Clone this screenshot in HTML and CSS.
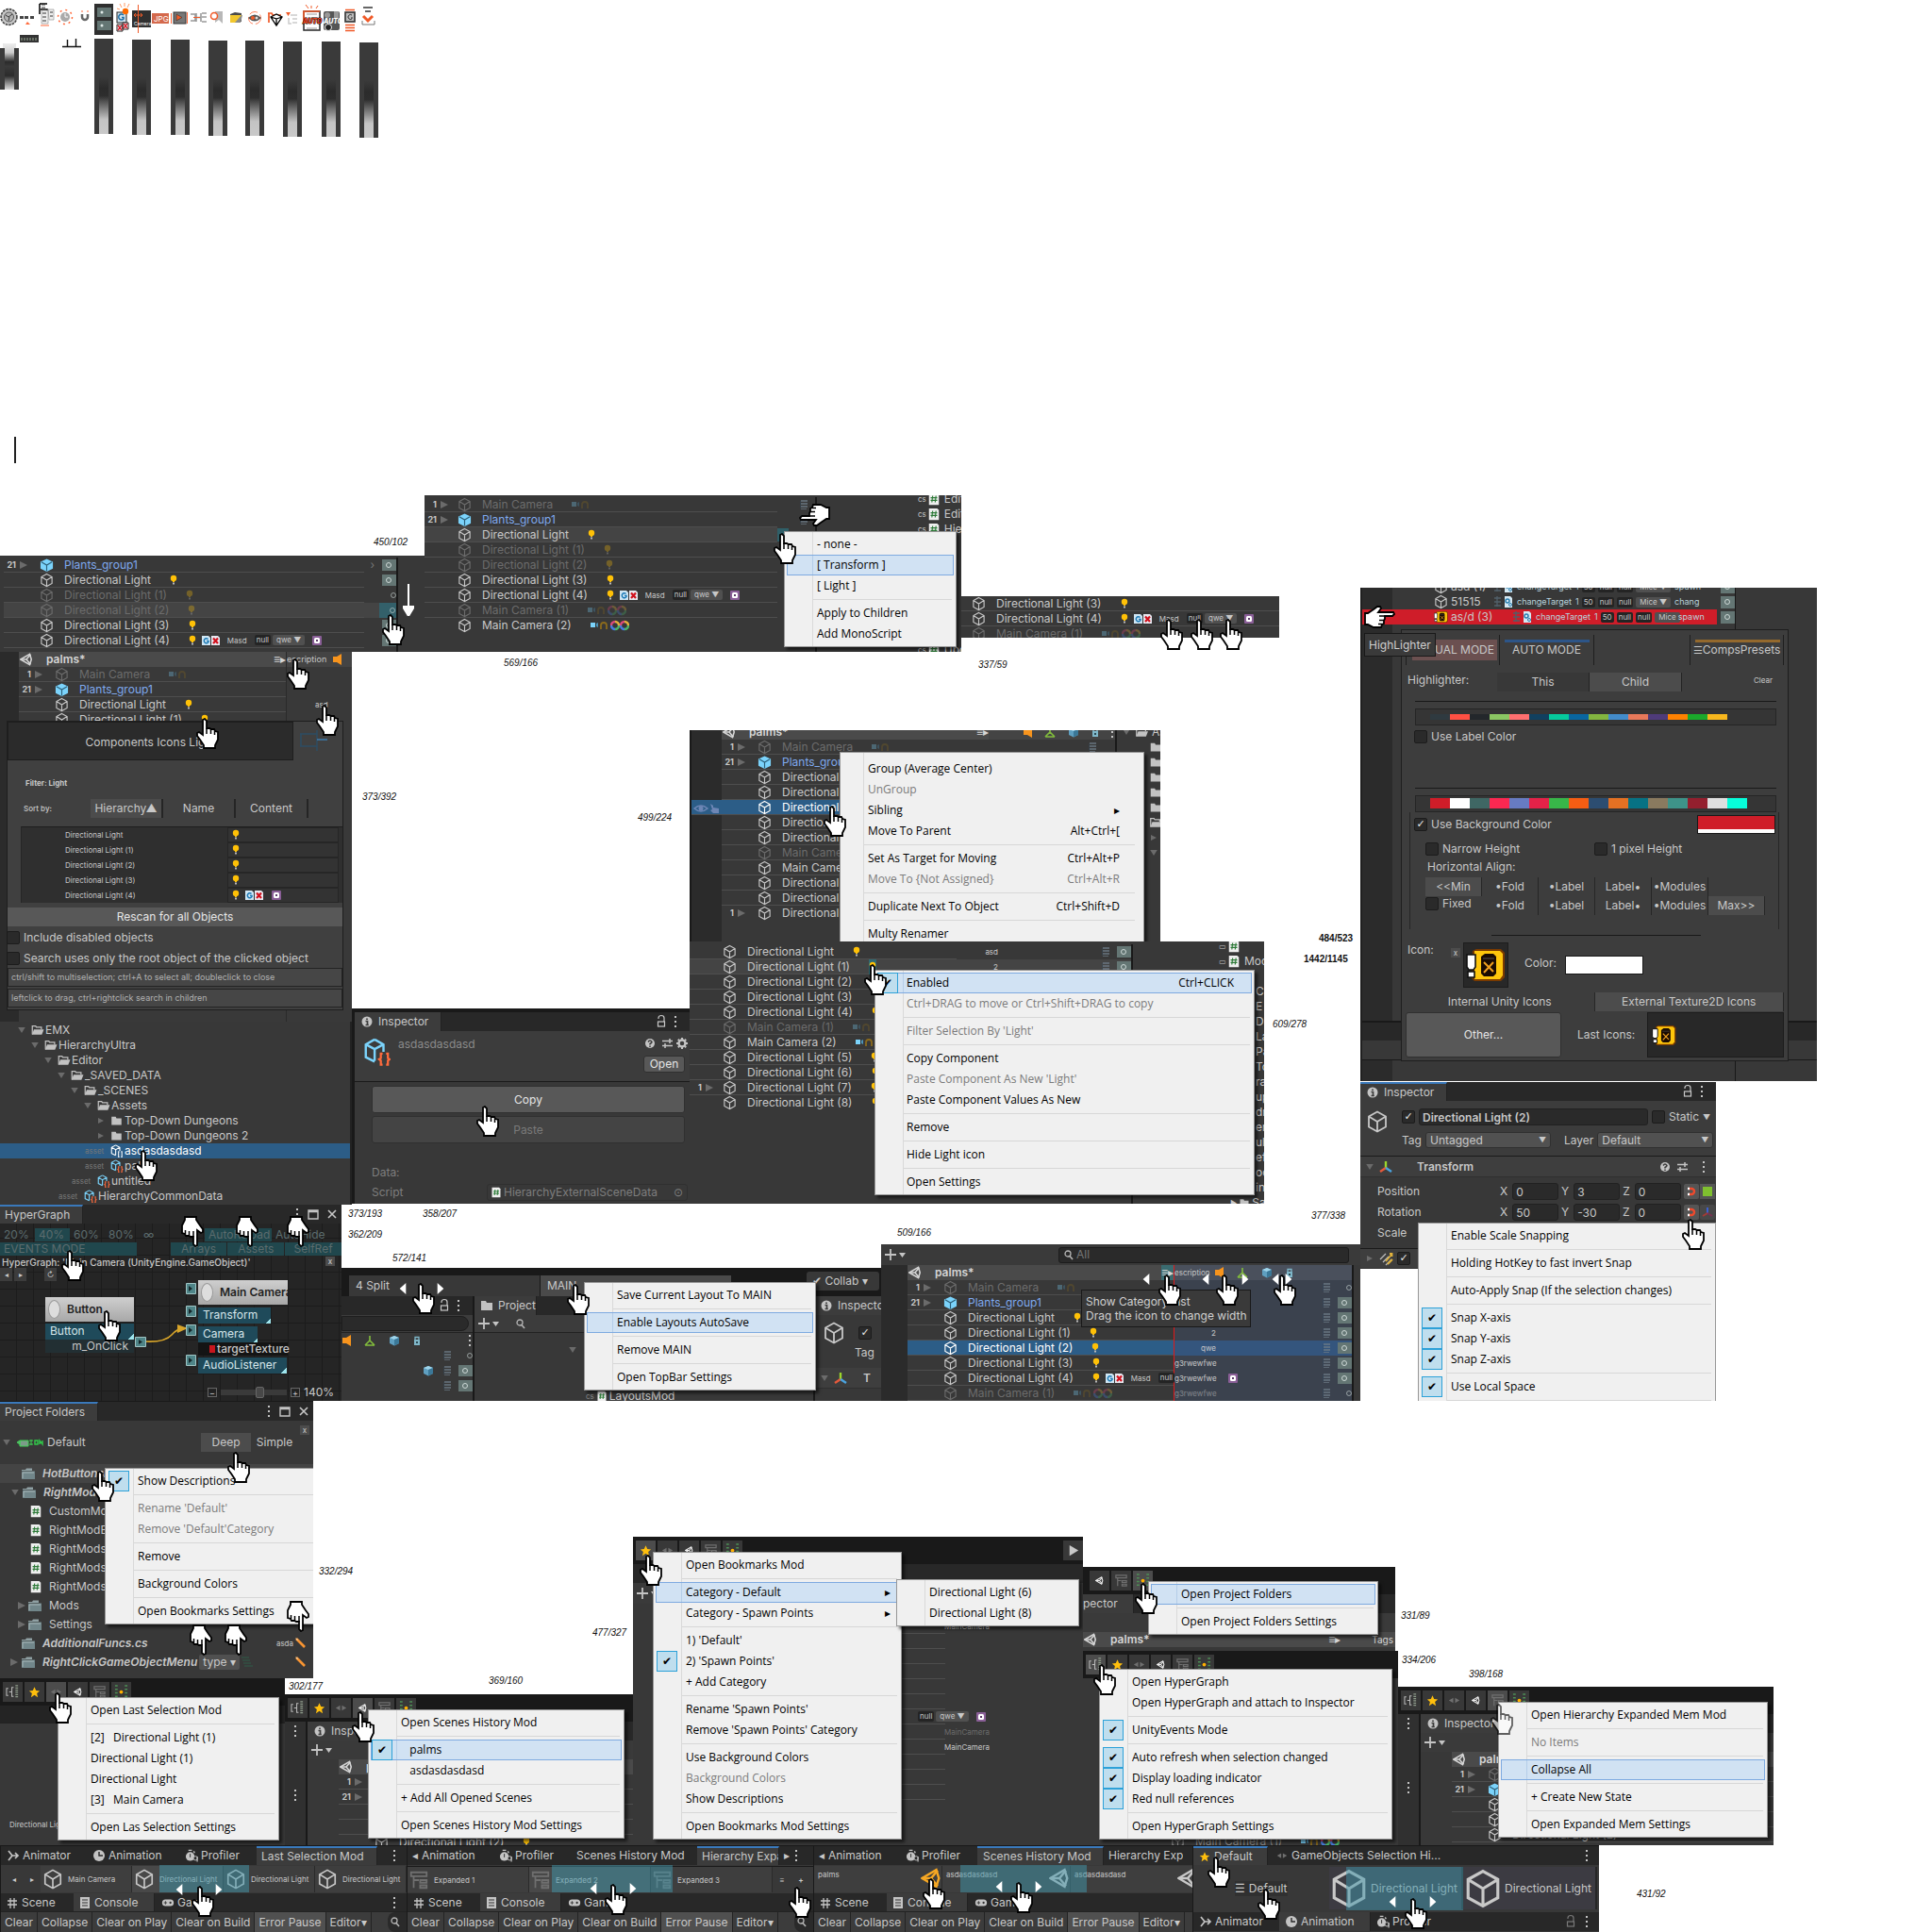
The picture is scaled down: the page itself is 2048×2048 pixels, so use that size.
FILE: index.html
```html
<!DOCTYPE html>
<html lang="en">
<head>
<meta charset="utf-8">
<title>Hierarchy help sheet</title>
<link rel="stylesheet" href="styles.css">
</head>
<body>
<svg class="defs" aria-hidden="true">
<symbol id="cube" viewBox="0 0 16 16"><path d="M8 1L14 4.3V11.7L8 15L2 11.7V4.3ZM2 4.3L8 8L14 4.3M8 8V15" fill="none" stroke="currentColor" stroke-width="1.2"/></symbol>
<symbol id="cubef" viewBox="0 0 16 16"><path d="M8 1L15 4.3V11.9L8 15.5L1 11.9V4.3Z" fill="#7bd3fb"/><path d="M2 4.6L8 8L14 4.6M8 8V15" fill="none" stroke="#2c5f78" stroke-width="1.2"/></symbol>
<symbol id="cubes" viewBox="0 0 16 16"><path d="M8 3L13 5V11L8 13.500L3 11V5Z" fill="#5f9fc0"/><path d="M3 5L8 7L13 5L8 3Z" fill="#9fd4ea"/><path d="M8 7V13.500L13 11V5Z" fill="#3b7898"/></symbol>
<symbol id="braces" viewBox="0 0 16 16"><path d="M7 1L12 3.8V8M7 13.5L2 11V3.8L7 1M2 3.8L7 6.5L12 3.8M7 6.5V13" fill="none" stroke="#7bd3fb" stroke-width="1.3"/><path d="M11.5 9H10.5V11.5L9.5 12.2L10.5 13V15.3H11.5M13.5 9H14.5V11.5L15.5 12.2L14.5 13V15.3H13.5" fill="none" stroke="#ff6b3d" stroke-width="1.2"/></symbol>
<symbol id="bracesw" viewBox="0 0 16 16"><path d="M7 1L12 3.8V8M7 13.5L2 11V3.8L7 1M2 3.8L7 6.5L12 3.8M7 6.5V13M11.5 9H10.5V15.3H11.5M13.5 9H14.5V15.3H13.5" fill="none" stroke="#fff" stroke-width="1.2"/></symbol>
<symbol id="bulb" viewBox="0 0 8 16"><circle cx="4" cy="6" r="3.2" fill="#ffc107"/><rect x="3" y="8" width="2" height="2" fill="#ffc107"/><rect x="3" y="10.5" width="2" height="2" fill="#b9b9b9"/></symbol>
<symbol id="tri" viewBox="0 0 8 16"><path d="M0 4L8 8L0 12Z" fill="#6b6b6b"/></symbol>
<symbol id="trid" viewBox="0 0 10 16"><path d="M0 4H10L5 12Z" fill="#6b6b6b"/></symbol>
<symbol id="gx" viewBox="0 0 20 16"><path d="M0 3H7L9 5V13H0Z" fill="#cfe6f4"/><path d="M6.500 6.500A2.500 2.500 0 1 0 7 9.500V8.500H5" fill="none" stroke="#1f7bb6" stroke-width="1.5"/><path d="M10 3H17L19 5V13H10Z" fill="#e8e8f0"/><path d="M12 5.500L17 11M17 5.500L12 11" stroke="#d1101c" stroke-width="2.200"/></symbol>
<symbol id="gear2" viewBox="0 0 20 16"><path d="M0 4H7M0 8H7M0 12H7M3 2V13" stroke="#51606a" stroke-width="1.300"/><path d="M11 2H17L19 4V14H11Z" fill="#d5e8f2"/><circle cx="14" cy="7" r="2" fill="none" stroke="#2a7fb0" stroke-width="1.500"/><circle cx="17" cy="11" r="1.500" fill="none" stroke="#2a7fb0"/></symbol>
<symbol id="pur" viewBox="0 0 10 16"><rect y="3" width="10" height="10" rx="1" fill="#8a5f97"/><rect x="2" y="5" width="6" height="6" rx="1.5" fill="#fff"/><rect x="4" y="7" width="2" height="2" fill="#5c3b68"/></symbol>
<symbol id="cam" viewBox="0 0 18 16"><rect x="0" y="5" width="5" height="5" fill="#7bd3fb"/><path d="M6 6L8 5V10L6 9Z" fill="#4a93b8"/><path d="M11 12V8A3 3 0 0 1 17 8V12" fill="none" stroke="#8a6a1c" stroke-width="1.8"/></symbol>
<symbol id="rings" viewBox="0 0 20 16"><g fill="none" stroke-width="2.4"><path d="M5 4A4 4 0 0 1 9 8M15 4A4 4 0 0 1 19 8" stroke="#e7b13a"/><path d="M9 8A4 4 0 0 1 5 12M19 8A4 4 0 0 1 15 12" stroke="#4bb56a"/><path d="M5 12A4 4 0 0 1 1 8M15 12A4 4 0 0 1 11 8" stroke="#4a7de0"/><path d="M1 8A4 4 0 0 1 5 4M11 8A4 4 0 0 1 15 4" stroke="#dd4a7a"/></g></symbol>
<symbol id="unity" viewBox="0 0 16 16"><path d="M1 8L12 1.500L14 8L12 14.500Z" fill="none" stroke="currentColor" stroke-width="1.8"/><path d="M1 8H8L13 2M8 8L13 14" fill="none" stroke="currentColor" stroke-width="1.8"/></symbol>
<symbol id="stack" viewBox="0 0 8 16"><g fill="#6c7a86"><rect x="1" y="3" width="7" height="2"/><rect x="1" y="6" width="7" height="2"/><rect x="1" y="9" width="7" height="2"/><rect x="1" y="12" width="6" height="1"/></g><path d="M0 4V12" stroke="#2f4a63"/></symbol>
<symbol id="fold" viewBox="0 0 16 16"><path d="M2 3H7L8 5H14V13H2Z" fill="#c2c2c2"/></symbol>
<symbol id="foldo" viewBox="0 0 16 16"><path d="M2 13V3H6L7 4.500H13V7" fill="none" stroke="#c2c2c2" stroke-width="1.4"/><path d="M4 7H16L13.500 13.500H1.500Z" fill="#c2c2c2"/></symbol>
<symbol id="foldg" viewBox="0 0 16 16"><path d="M1 4H5L6 2.500H12V5H1Z" fill="#8fa0a3"/><path d="M1 5.500H15V14H1Z" fill="#71868a"/><path d="M2 13V7H14" fill="none" stroke="#a7b6b8"/></symbol>
<symbol id="hash" viewBox="0 0 12 16"><path d="M0 1H10L12 3V15H0Z" fill="#efefef"/><path d="M4.500 4L3.500 12M8.500 4L7.500 12M2 6.500H10M2 9.500H10" stroke="#2d7a38" stroke-width="1.3"/></symbol>
<symbol id="info" viewBox="0 0 16 16"><circle cx="8" cy="8" r="5.500" fill="#c4c4c4"/><path d="M8 4.500V6M6.500 7.500H8.500V11M6.500 11.500H9.800" stroke="#3c3c3c" stroke-width="1.7" fill="none"/></symbol>
<symbol id="lock" viewBox="0 0 12 16"><path d="M3 5V4A3 2.500 0 0 1 9 4V8" fill="none" stroke="currentColor" stroke-width="1.2"/><rect x="2.500" y="8" width="7" height="5" fill="none" stroke="currentColor" stroke-width="1.2"/></symbol>
<symbol id="dots" viewBox="0 0 6 16"><path d="M2 2H4V4H2ZM2 7H4V9H2ZM2 12H4V14H2Z" fill="#c4c4c4"/></symbol>
<symbol id="max" viewBox="0 0 12 16"><path d="M1 4H11V13H1ZM1 5.500H11" fill="none" stroke="#c4c4c4" stroke-width="1.400"/></symbol>
<symbol id="x" viewBox="0 0 12 16"><path d="M2 4L10 12M10 4L2 12" stroke="currentColor" stroke-width="1.6"/></symbol>
<symbol id="help" viewBox="0 0 34 16"><circle cx="8" cy="8" r="5" fill="#c4c4c4"/><path d="M6 6.500Q8 3.500 10 6.500Q10 7.500 8 8.500V9.500M8 10.500V12" stroke="#3c3c3c" stroke-width="1.5" fill="none"/><path d="M21 5.500H32M21 10.500H32M29 3V8M24 8V13" stroke="#c4c4c4" stroke-width="1.500"/></symbol>
<symbol id="cog" viewBox="0 0 16 16"><circle cx="8" cy="8" r="3.500" fill="none" stroke="#c4c4c4" stroke-width="2.400"/><path d="M8 2V4M8 12V14M2 8H4M12 8H14M3.800 3.800L5.200 5.200M10.800 10.800L12.200 12.200M3.800 12.200L5.200 10.800M10.800 5.200L12.200 3.800" stroke="#c4c4c4" stroke-width="2"/></symbol>
<symbol id="find" viewBox="0 0 12 16"><circle cx="5" cy="7" r="3" fill="none" stroke="#b5b5b5" stroke-width="1.3"/><path d="M7 9.500L10 13" stroke="#b5b5b5" stroke-width="1.600"/></symbol>
<symbol id="plus" viewBox="0 0 24 16"><path d="M7 2V14M1 8H13" stroke="#c4c4c4" stroke-width="1.800"/><path d="M16 6H23L19.500 11Z" fill="#c4c4c4"/></symbol>
<symbol id="speaker" viewBox="0 0 12 16"><path d="M1 5H5L10 2V14L5 11H1Z" fill="#f7941d"/></symbol>
<symbol id="axis" viewBox="0 0 16 16"><path d="M8 9V2" stroke="#9bd62c" stroke-width="2.400"/><path d="M8 9L2 13" stroke="#e5593b" stroke-width="2.400"/><path d="M8 9L14 13" stroke="#4aa3df" stroke-width="2.400"/></symbol>
<symbol id="axisd" viewBox="0 0 16 16"><rect width="16" height="16" rx="2" fill="#484848"/><path d="M8 9V3" stroke="#3b5fd0" stroke-width="2"/><path d="M8 9L3 12" stroke="#a53a35" stroke-width="2"/><path d="M8 9L13 12" stroke="#7a3050" stroke-width="2"/></symbol>
<symbol id="tent" viewBox="0 0 14 16"><path d="M7 3V8L2 13M7 8L12 13M2 13H12" fill="none" stroke="#82bd3c" stroke-width="1.600"/></symbol>
<symbol id="locks" viewBox="0 0 10 16"><path d="M3 7V4.500H7V7" fill="none" stroke="#7fb7c9" stroke-width="1.300"/><rect x="2" y="7" width="6" height="6" fill="#7fb7c9"/><rect x="4" y="9" width="2" height="2" fill="#2c4a55"/></symbol>
<symbol id="play" viewBox="0 0 16 16"><path d="M4 2V14L14 8Z" fill="#c9c9c9"/></symbol>
<symbol id="mem" viewBox="0 0 16 16"><path d="M3 4H1V12H3M4 8H7M9 3H7V13H9" fill="none" stroke="#bbb" stroke-width="1.100"/><path d="M11 1H14M11 3.500H14M11 6H14M11 8.500H14M11 11H14M11 13.500H14" stroke="#8f9c8b" stroke-width="1.300"/></symbol>
<symbol id="star" viewBox="0 0 16 16"><path d="M8 2.500L9.800 6.500L14 6.800L10.800 9.500L11.800 14L8 11.500L4.200 14L5.200 9.500L2 6.800L6.200 6.500Z" fill="#ffbf0d"/></symbol>
<symbol id="lr" viewBox="0 0 16 16"><path d="M7 5V11L2 8ZM9 5V11L14 8Z" fill="#6f6f6f"/></symbol>
<symbol id="list" viewBox="0 0 16 16"><path d="M2 2H14V5H2ZM4 5V14M4 8H8M9 8H14V10H9ZM9 12H14V14H9Z" fill="none" stroke="#6f6f6f" stroke-width="1.300"/></symbol>
<symbol id="grid4" viewBox="0 0 16 16"><path d="M1 1H4M12 1H15M1 5H4M12 5H15M1 9H4M12 9H15M1 13H4M12 13H15" stroke="#4d8f55" stroke-width="1.500"/><circle cx="8" cy="8" r="2" fill="#ffb000"/></symbol>
<symbol id="anim" viewBox="0 0 14 16"><path d="M2 3L6 8H12M2 13L6 8M9 5L12 8L9 11" fill="none" stroke="#c4c4c4" stroke-width="1.700"/></symbol>
<symbol id="clock" viewBox="0 0 14 16"><circle cx="7" cy="8" r="6" fill="#c4c4c4"/><path d="M7 4V8H11" fill="none" stroke="#282828" stroke-width="1.400"/></symbol>
<symbol id="prof" viewBox="0 0 15 16"><circle cx="6" cy="9" r="5" fill="#c4c4c4"/><path d="M6 6V9.500M4 2H8M10 3L11 5" stroke="#c4c4c4" stroke-width="1.500"/><path d="M6 6V10" stroke="#282828"/><circle cx="12" cy="11" r="2.300" fill="#282828" stroke="#c4c4c4"/><path d="M14 9V15" stroke="#c4c4c4" stroke-width="1.300"/></symbol>
<symbol id="sharp" viewBox="0 0 12 16"><path d="M4 3V14M8 3V14M1 6H11M1 10H11" stroke="#c4c4c4" stroke-width="1.300"/></symbol>
<symbol id="cons" viewBox="0 0 12 16"><path d="M1 2H11V14H1Z" fill="#c4c4c4"/><path d="M3 5H9M3 8H9M3 11H9" stroke="#333"/></symbol>
<symbol id="pad" viewBox="0 0 16 16"><rect x="1" y="4" width="14" height="8" rx="4" fill="#c4c4c4"/><path d="M5 6V10M3 8H7" stroke="#333"/><circle cx="11" cy="8" r="1.300" fill="#333"/></symbol>
<symbol id="pencil" viewBox="0 0 12 12"><path d="M1 1L10 10" stroke="#f79432" stroke-width="2.600"/><path d="M0 0L3 2L2 3Z" fill="#f2dbc0"/></symbol>
<symbol id="jar" viewBox="0 0 42 36"><path d="M7 3L11 1H37L41 5V31L37 35H9L5 31Z" fill="#7a3a00"/><path d="M9 3H36L39 6V29L36 33H9Z" fill="#ffc60b"/><path d="M16 9L20 6H29L32 9V27L29 30H19L16 27Z" fill="#1a0b02"/><path d="M18 11H30" stroke="#555"/><path d="M19 15L29 25M29 15L19 26" stroke="#f0a020" stroke-width="2"/><path d="M1 7H10V20L8 23H3L1 20ZM2 25H9V31H2Z" fill="#fff" stroke="#111" stroke-width="1.600"/></symbol>
<symbol id="magnet" viewBox="0 0 16 16"><rect width="16" height="16" rx="2" fill="#555"/><path d="M6 5H8A3 3 0 0 1 8 11H6" fill="none" stroke="#ee4a2d" stroke-width="2.400"/><path d="M4 5H6M4 11H6" stroke="#fff" stroke-width="2.400"/></symbol>
<symbol id="hand" viewBox="0 0 25 33"><path d="M8 2L10 1L12 3V11H15L17 12H20L21 14L24 15V23L21 29V32H9V29L5 23L2 19V16L4 15L8 18Z" fill="#fff" stroke="#000" stroke-width="1.800"/><path d="M12 11V17M16.500 12V17M20.500 14V18" stroke="#000" stroke-width="1.500"/></symbol>
<symbol id="arrl" viewBox="0 0 10 18"><path d="M10 0V18L0 9Z" fill="#fff"/></symbol>
<symbol id="arrr" viewBox="0 0 10 18"><path d="M0 0V18L10 9Z" fill="#fff"/></symbol>
</svg>

<main class="desk">
<!-- toolbar glyph strip -->
<svg class="glyphs" viewBox="0 0 410 150" role="img" aria-label="Module icons">
<defs><linearGradient id="gr" x1="0" y1="0" x2="0" y2="1"><stop offset=".4" stop-color="#3a3a3a"/><stop offset=".52" stop-color="#2b2b2b"/><stop offset=".6" stop-color="#2e2e2e"/><stop offset=".72" stop-color="#777"/><stop offset=".85" stop-color="#c4c4c4"/><stop offset="1" stop-color="#c9c9c9"/></linearGradient>
<linearGradient id="gs" x1="0" y1="0" x2="0" y2="1"><stop offset="0" stop-color="#eee"/><stop offset=".2" stop-color="#ccc"/><stop offset=".4" stop-color="#2b2b2b"/><stop offset=".5" stop-color="#3a3a3a"/><stop offset=".7" stop-color="#2b2b2b"/><stop offset=".85" stop-color="#888"/><stop offset="1" stop-color="#ddd"/></linearGradient>
<g id="bar"><rect width="20" height="101" fill="#3a3a3a"/><rect x="5" width="10" height="101" fill="url(#gr)"/></g></defs>
<circle cx="9.500" cy="18" r="8.400" fill="#c9c9c9" stroke="#444" stroke-width="1.600" stroke-dasharray="2.600 1"/><circle cx="9.500" cy="18" r="5" fill="#b5b5b5" stroke="#555"/><path d="M6 16L9 18L13 15M10 18L9 22" stroke="#333" fill="none"/>
<path d="M21 17H25V20H21ZM26 17H30V20H26ZM32 17H36V20H32Z" fill="#444"/><path d="M29 23L32 26H27Z" fill="#ff6a3c"/>
<path d="M42 4H50M42 4V15M43 10H50V14" fill="none" stroke="#000" stroke-width="1.500"/><path d="M44 11H51V25H44ZM51 10H57V21H52Z" fill="#eee" stroke="#888" stroke-width=".6"/><path d="M45 14H49M45 18H49M45 22H49M53 13H56M53 17H56M44 5H48M44 8H48" stroke="#333"/><path d="M43 27H52" stroke="#ff6a3c"/>
<circle cx="69" cy="18" r="5" fill="#aaa"/><circle cx="69" cy="18" r="7.500" fill="none" stroke="#ff6a3c" stroke-width="1.500" stroke-dasharray="2 3.900"/><path d="M69 14V18H72" stroke="#fff" fill="none"/>
<path d="M87 15V18A3 3 0 0 0 93 18V15" fill="none" stroke="#666" stroke-width="2.500"/><path d="M86 12H88M92 12H94" stroke="#ff6a3c"/>
<rect x="100" y="4" width="20" height="33" fill="#2f2f2f"/><path d="M103 8H118V18H103ZM103 22H118V32H103Z" fill="#647674"/><circle cx="108" cy="13" r="1.500" fill="#dfe9e7"/><circle cx="108" cy="27" r="1.500" fill="#dfe9e7"/>
<rect x="124" y="13" width="10" height="11" fill="#cfe2ee" stroke="#222"/><path d="M131 16A3 3 0 1 0 131 20V18.500H129" fill="none" stroke="#1f6fa5" stroke-width="1.500"/><circle cx="133" cy="12" r="3.200" fill="#ff6a00"/><path d="M127 4L129 8M132 3V7M137 4L135 8M124 9L127 10" stroke="#ff9a66"/><path d="M124 26H130V33H124ZM130 24H136V31H130Z" fill="#fff" stroke="#222"/><path d="M125 27L129 32M129 27L125 32M131 25L135 30M135 25L131 30" stroke="#d1202c" stroke-width="1.500"/>
<rect x="140" y="11" width="20" height="18" fill="#303030"/><path d="M146.500 5V35M142 16H151M144 14L142 16L144 18M149 14L151 16L149 18" stroke="#f05a28" fill="none"/><text x="142" y="27" class="g6">Camera</text>
<rect x="161" y="14" width="18" height="11" fill="#d4694c"/><text x="163" y="23" class="g8">JPG</text>
<path d="M181.500 14V25M198.500 13V25" stroke="#ff6a3c"/><rect x="184" y="13" width="13" height="12" fill="#777" stroke="#333"/><path d="M187 15V22L193 18.500Z" fill="#f05a28" stroke="#333" stroke-width=".6"/>
<path d="M202 15H207V22H202M208 14V23M208 18.500H213V14M213 23V18M214 14H219M214 18H219M214 23H219" fill="none" stroke="#999" stroke-width="1.600"/><path d="M205 18.500H212" stroke="#f05a28"/>
<path d="M228 12H236V25L232 21L228 24Z" fill="#b8b8b8"/><circle cx="227" cy="17" r="3.500" fill="#fff" stroke="#f05a28" stroke-width="1.500"/>
<path d="M244 15L249 13L256 14V23H244Z" fill="#4a4a4a"/><path d="M244 16H257L255 24H244Z" fill="#8a8a8a"/><path d="M244 16H256L249 24H244Z" fill="#f2c72d"/>
<circle cx="270" cy="19" r="6.500" fill="none" stroke="#ff8560" stroke-dasharray="9 3"/><path d="M263 19Q270 12 277 19Q270 26 263 19Z" fill="#555"/><circle cx="268" cy="19" r="2" fill="#f05a28"/><circle cx="272" cy="19" r="1.500" fill="#ddd"/>
<path d="M284 14H288L289 16H298M285 14V24" stroke="#f05a28" fill="none" stroke-width="1.700"/><path d="M287 18L293 15L299 18L293 27ZM293 27V20L287 18M293 20L299 18" fill="#fff" stroke="#000" stroke-width="1.300"/>
<path d="M303 13H308L305.500 17Z" fill="#f05a28"/><path d="M308 16H315M310 20H315M310 24H315M306 19V25H309" stroke="#ccc" fill="none" stroke-width="1.500"/>
<rect x="322" y="12" width="17" height="20" fill="#fff" stroke="#333" stroke-width="1.600"/><path d="M322 25V12H339" stroke="#f05a28" stroke-width="1.600" fill="none"/><path d="M325 15H336M325 30H336" stroke="#999"/><path d="M324 5L327 9M330 6V9M337 6L335 9" stroke="#f05a28"/><text x="321" y="25" class="g7 red">AUTO</text>
<rect x="343" y="12" width="17" height="20" rx="2" fill="#555"/><circle cx="347" cy="16" r="3" fill="#999"/><circle cx="348" cy="29" r="3.500" fill="#222" stroke="#eee"/><rect x="354" y="12" width="5" height="7" fill="#999"/><text x="343" y="25" class="g7">AUTO</text>
<path d="M366 10.500H376M366 26.500H376M366 29.500H376M366 32.500H376" stroke="#f05a28" stroke-width="1.300"/><rect x="366" y="13" width="10" height="10" fill="#bbb" stroke="#333" stroke-width="1.600"/><path d="M373 16A2.500 2.500 0 1 0 373 20V18" stroke="#333" fill="none"/>
<path d="M385 8H395M387 12H393" stroke="#666" stroke-width="2"/><path d="M385 17L390 22L395 17" stroke="#f05a28" stroke-width="3" fill="none"/><path d="M384 22V26H397V22" fill="none" stroke="#777"/>
<rect x="21" y="37" width="20" height="8" fill="#333"/><path d="M23 40V43M26 40V43M29 40V43M32 40V43M35 40V43M38 40V43" stroke="#9fb09a"/>
<path d="M66 49.500H86M71.500 42V49M80.500 41V49" stroke="#111" stroke-width="1.400"/>
<rect y="51" width="20" height="44" fill="#3a3a3a"/><rect x="3" y="46" width="14" height="5" fill="#e8e8e8"/><rect x="5" y="46" width="10" height="49" fill="url(#gs)"/>
<use href="#bar" x="100" y="41"/><use href="#bar" x="140" y="42"/><use href="#bar" x="181" y="42"/><use href="#bar" x="221" y="43"/><use href="#bar" x="260" y="43"/><use href="#bar" x="300" y="44"/><use href="#bar" x="341" y="44"/><use href="#bar" x="381" y="45"/>
</svg>
<div class="caret"></div>

<!-- drag to apply -->
<section class="tile t1">
<div class="rows w382">
<div class="row pre"><span class="n">21</span><svg class="tr"><use href="#tri"/></svg><svg class="cu"><use href="#cubef"/></svg><span>Plants_group1</span></div>
<div class="row leaf"><svg class="cu"><use href="#cube"/></svg><span>Directional Light</span><svg class="bu"><use href="#bulb"/></svg></div>
<div class="row leaf dim"><svg class="cu"><use href="#cube"/></svg><span>Directional Light (1)</span><svg class="bu"><use href="#bulb"/></svg></div>
<div class="row leaf dim hov"><svg class="cu"><use href="#cube"/></svg><span>Directional Light (2)</span><svg class="bu"><use href="#bulb"/></svg></div>
<div class="row leaf"><svg class="cu"><use href="#cube"/></svg><span>Directional Light (3)</span><svg class="bu"><use href="#bulb"/></svg></div>
<div class="row leaf"><svg class="cu"><use href="#cube"/></svg><span>Directional Light (4)</span><svg class="bu"><use href="#bulb"/></svg><svg class="gx"><use href="#gx"/></svg><small>Masd</small><em class="nul">null</em><em class="qwe">qwe ▼</em><svg class="pu"><use href="#pur"/></svg></div>
</div>
<div class="side s1"><div class="sc"><span class="chev">›</span><i class="rc"></i></div><div class="sc"><i class="rc"></i></div><div class="sc"><i class="rc off"></i></div><div class="sc hov"><i class="rc teal"></i></div><div class="sc"><i class="rc"></i></div><div class="sc"><i class="rc"></i></div></div>
<svg class="down" viewBox="0 0 12 34"><path d="M6 0V26M0 24H12L6 34Z" stroke="#fff" stroke-width="2" fill="#fff"/></svg>
</section>

<!-- custom icons menu -->
<section class="tile t2">
<div class="rows w374">
<div class="row dim"><span class="n">1</span><svg class="tr"><use href="#tri"/></svg><svg class="cu"><use href="#cube"/></svg><span>Main Camera</span><svg class="ca"><use href="#cam"/></svg></div>
<div class="row pre"><span class="n">21</span><svg class="tr"><use href="#tri"/></svg><svg class="cu"><use href="#cubef"/></svg><span>Plants_group1</span></div>
<div class="row leaf hov"><svg class="cu"><use href="#cube"/></svg><span>Directional Light</span><svg class="bu"><use href="#bulb"/></svg></div>
<div class="row leaf dim"><svg class="cu"><use href="#cube"/></svg><span>Directional Light (1)</span><svg class="bu"><use href="#bulb"/></svg></div>
<div class="row leaf dim"><svg class="cu"><use href="#cube"/></svg><span>Directional Light (2)</span><svg class="bu"><use href="#bulb"/></svg></div>
<div class="row leaf"><svg class="cu"><use href="#cube"/></svg><span>Directional Light (3)</span><svg class="bu"><use href="#bulb"/></svg></div>
<div class="row leaf"><svg class="cu"><use href="#cube"/></svg><span>Directional Light (4)</span><svg class="bu"><use href="#bulb"/></svg><svg class="gx"><use href="#gx"/></svg><small>Masd</small><em class="nul">null</em><em class="qwe">qwe ▼</em><svg class="pu"><use href="#pur"/></svg></div>
<div class="row leaf dim"><svg class="cu"><use href="#cube"/></svg><span>Main Camera (1)</span><svg class="ca"><use href="#cam"/></svg><svg class="ri"><use href="#rings"/></svg></div>
<div class="row leaf last"><svg class="cu"><use href="#cube"/></svg><span>Main Camera (2)</span><svg class="ca"><use href="#cam"/></svg><svg class="ri"><use href="#rings"/></svg></div>
</div>
<div class="side s2"><div class="sc"><svg class="st"><use href="#stack"/></svg></div><div class="sc"><svg class="st"><use href="#stack"/></svg></div><div class="sc"><i class="blk"></i></div></div>
<div class="files"><div>cs <svg><use href="#hash"/></svg><span>Edit</span></div><div>cs <svg><use href="#hash"/></svg><span>Edit</span></div><div>cs <svg><use href="#hash"/></svg><span>Hier</span></div><div><span>ic</span></div><div><span>S</span></div><div><span>cr</span></div><div><span>W</span></div><div><span>r</span></div><div><span>T</span></div><div><span>cc</span></div><div>cs <svg><use href="#hash"/></svg><span>Updat</span></div></div>
<div class="menu m1"><button>- none -</button><button class="hl">[ Transform ]</button><button>[ Light ]</button><hr><button>Apply to Children</button><button>Add MonoScript</button></div>
</section>

<section class="tile t3">
<div class="rows shift">
<div class="row leaf"><svg class="cu"><use href="#cube"/></svg><span>Directional Light (3)</span><svg class="bu"><use href="#bulb"/></svg></div>
<div class="row leaf"><svg class="cu"><use href="#cube"/></svg><span>Directional Light (4)</span><svg class="bu"><use href="#bulb"/></svg><svg class="gx"><use href="#gx"/></svg><small>Masd</small><em class="nul">null</em><em class="qwe">qwe ▼</em><svg class="pu"><use href="#pur"/></svg></div>
<div class="row leaf dim"><svg class="cu"><use href="#cube"/></svg><span>Main Camera (1)</span><svg class="ca"><use href="#cam"/></svg><svg class="ri"><use href="#rings"/></svg></div>
</div>
</section>

<!-- component search -->
<section class="tile t4">
<div class="strip20"></div>
<div class="rows w283">
<div class="row head"><svg class="un"><use href="#unity"/></svg><b>palms*</b><span class="arrow">≡▸</span></div>
<div class="row dim"><span class="n">1</span><svg class="tr"><use href="#tri"/></svg><svg class="cu"><use href="#cube"/></svg><span>Main Camera</span><svg class="ca"><use href="#cam"/></svg></div>
<div class="row pre"><span class="n">21</span><svg class="tr"><use href="#tri"/></svg><svg class="cu"><use href="#cubef"/></svg><span>Plants_group1</span></div>
<div class="row leaf"><svg class="cu"><use href="#cube"/></svg><span>Directional Light</span><svg class="bu"><use href="#bulb"/></svg></div>
<div class="row leaf"><svg class="cu"><use href="#cube"/></svg><span>Directional Light (1)</span><svg class="bu"><use href="#bulb"/></svg></div>
</div>
<div class="side s4"><div class="sc hov"><small>escription</small><svg class="sp"><use href="#speaker"/></svg></div><div class="sc"></div><div class="sc"></div><div class="sc asd"><small>asd</small></div></div>
<div class="pop p4">
<div class="ptitle"><span>Components Icons Light</span><svg viewBox="0 0 30 24"><path d="M0 5H18M0 18H18M1 5V18M18 1V23" stroke="#2d4c63" stroke-width="1.500" fill="none"/><path d="M18 11H29" stroke="#3d6c92" stroke-width="2"/></svg></div>
<p class="filter">Filter: Light</p>
<div class="sort"><span>Sort by:</span><button class="on">Hierarchy▲</button><button>Name</button><button>Content</button></div>
<div class="found"><div><span>Directional Light</span><i><svg class="bu"><use href="#bulb"/></svg></i></div><div><span>Directional Light (1)</span><i><svg class="bu"><use href="#bulb"/></svg></i></div><div><span>Directional Light (2)</span><i><svg class="bu"><use href="#bulb"/></svg></i></div><div><span>Directional Light (3)</span><i><svg class="bu"><use href="#bulb"/></svg></i></div><div><span>Directional Light (4)</span><i><svg class="bu"><use href="#bulb"/></svg><svg class="gx"><use href="#gx"/></svg><svg class="pu"><use href="#pur"/></svg></i></div></div>
<button class="rescan">Rescan for all Objects</button>
<label class="cb"><input type="checkbox">Include disabled objects</label>
<label class="cb"><input type="checkbox">Search uses only the root object of the clicked object</label>
<p class="note">ctrl/shift to multiselection; ctrl+A to select all; doubleclick to close</p>
<p class="note">leftclick to drag, ctrl+rightclick search in children</p>
</div>
</section>

<!-- project tree -->
<section class="tile t5">
<div class="tree">
<div class="d0"><svg class="td"><use href="#trid"/></svg><svg><use href="#foldo"/></svg>EMX</div>
<div class="d1"><svg class="td"><use href="#trid"/></svg><svg><use href="#foldo"/></svg>HierarchyUltra</div>
<div class="d2"><svg class="td"><use href="#trid"/></svg><svg><use href="#foldo"/></svg>Editor</div>
<div class="d3"><svg class="td"><use href="#trid"/></svg><svg><use href="#foldo"/></svg>_SAVED_DATA</div>
<div class="d4"><svg class="td"><use href="#trid"/></svg><svg><use href="#foldo"/></svg>_SCENES</div>
<div class="d5"><svg class="td"><use href="#trid"/></svg><svg><use href="#foldo"/></svg>Assets</div>
<div class="d6"><svg class="td"><use href="#tri"/></svg><svg><use href="#fold"/></svg>Top-Down Dungeons</div>
<div class="d6"><svg class="td"><use href="#tri"/></svg><svg><use href="#fold"/></svg>Top-Down Dungeons 2</div>
<div class="d6 sel"><small>asset</small><svg><use href="#bracesw"/></svg>asdasdasdasd</div>
<div class="d6"><small>asset</small><svg><use href="#braces"/></svg>palms</div>
<div class="d5"><small>asset</small><svg><use href="#braces"/></svg>untitled</div>
<div class="d4"><small>asset</small><svg><use href="#braces"/></svg>HierarchyCommonData</div>
</div>
</section>

<section class="tile t6">
<div class="tabs top4"><span class="tab w92"><svg class="i"><use href="#info"/></svg>Inspector</span><span class="sp1"></span><svg class="lk"><use href="#lock"/></svg><svg class="dt"><use href="#dots"/></svg></div>
<div class="ihead"><svg class="big"><use href="#braces"/></svg><span>asdasdasdasd</span><span class="sp1"></span><div class="icol"><div><svg class="hp"><use href="#help"/></svg><svg class="i"><use href="#cog"/></svg></div><button class="ub">Open</button></div></div>
<div class="ibody"><button class="ub lg">Copy</button><button class="ub lg" disabled>Paste</button>
<p>Data:</p><p class="scr"><span>Script</span><span class="objf"><svg class="hs"><use href="#hash"/></svg>HierarchyExternalSceneData<span class="sp1"></span>⊙</span></p></div>
</section>

<!-- right click menu -->
<section class="tile t7">
<div class="strip34"></div>
<div class="rows w283 up7">
<div class="row head"><svg class="un"><use href="#unity"/></svg><b>palms*</b><span class="arrow">≡▸</span></div>
<div class="row dim"><span class="n">1</span><svg class="tr"><use href="#tri"/></svg><svg class="cu"><use href="#cube"/></svg><span>Main Camera</span><svg class="ca"><use href="#cam"/></svg></div>
<div class="row pre"><span class="n">21</span><svg class="tr"><use href="#tri"/></svg><svg class="cu"><use href="#cubef"/></svg><span>Plants_group1</span></div>
<div class="row leaf"><svg class="cu"><use href="#cube"/></svg><span>Directional Light</span></div>
<div class="row leaf"><svg class="cu"><use href="#cube"/></svg><span>Directional Light (1)</span></div>
<div class="row leaf sel"><svg class="cu"><use href="#cube"/></svg><span>Directional Light (2)</span></div>
<div class="row leaf"><svg class="cu"><use href="#cube"/></svg><span>Directional Light (3)</span></div>
<div class="row leaf"><svg class="cu"><use href="#cube"/></svg><span>Directional Light (4)</span></div>
<div class="row leaf dim"><svg class="cu"><use href="#cube"/></svg><span>Main Camera (1)</span></div>
<div class="row leaf"><svg class="cu"><use href="#cube"/></svg><span>Main Camera (2)</span></div>
<div class="row leaf"><svg class="cu"><use href="#cube"/></svg><span>Directional Light (5)</span></div>
<div class="row leaf"><svg class="cu"><use href="#cube"/></svg><span>Directional Light (6)</span></div>
<div class="row last"><span class="n">1</span><svg class="tr"><use href="#tri"/></svg><svg class="cu"><use href="#cube"/></svg><span>Directional Light (7)</span></div>
</div>
<div class="side s7 up7"><div class="sc hov"><svg class="sp"><use href="#speaker"/></svg><svg class="i"><use href="#tent"/></svg><svg class="i"><use href="#cubes"/></svg><svg class="lk"><use href="#locks"/></svg><svg class="dt"><use href="#dots"/></svg></div><div class="sc"><svg class="st"><use href="#stack"/></svg></div></div>
<div class="fcol up7"><div><svg class="td"><use href="#trid"/></svg><svg><use href="#foldo"/></svg>As</div><div class="in"><svg><use href="#fold"/></svg></div><div class="in"><svg><use href="#fold"/></svg></div><div class="in"><svg><use href="#fold"/></svg></div><div class="in"><svg><use href="#fold"/></svg></div><div class="in"><svg><use href="#fold"/></svg></div><div class="in"><svg><use href="#foldo"/></svg></div><div class="in0"><svg class="td"><use href="#tri"/></svg></div><div class="in0"><svg class="td"><use href="#trid"/></svg></div></div>
<svg class="eye" viewBox="0 0 32 16"><path d="M2 8Q9 2 16 8Q9 14 2 8Z" fill="none" stroke="#6d86b5" stroke-width="1.500"/><circle cx="9" cy="8" r="2.500" fill="#6d86b5"/><path d="M19 3L22 5V7L28 8V13H22L19 10L21 9Z" fill="#6d86b5"/></svg>
<div class="menu m2"><button>Group (Average Center)</button><button disabled>UnGroup</button><button>Sibling<kbd>▸</kbd></button><button>Move To Parent<kbd>Alt+Ctrl+[</kbd></button><hr><button>Set As Target for Moving<kbd>Ctrl+Alt+P</kbd></button><button disabled>Move To {Not Assigned}<kbd>Ctrl+Alt+R</kbd></button><hr><button>Duplicate Next To Object<kbd>Ctrl+Shift+D</kbd></button><hr><button>Multy Renamer</button></div>
</section>

<!-- component menu -->
<section class="tile t8">
<div class="rows w283">
<div class="row leaf"><svg class="cu"><use href="#cube"/></svg><span>Directional Light</span><svg class="bu"><use href="#bulb"/></svg></div>
<div class="row leaf hov"><svg class="cu"><use href="#cube"/></svg><span>Directional Light (1)</span><svg class="bu tealbg"><use href="#bulb"/></svg></div>
<div class="row leaf"><svg class="cu"><use href="#cube"/></svg><span>Directional Light (2)</span></div>
<div class="row leaf"><svg class="cu"><use href="#cube"/></svg><span>Directional Light (3)</span></div>
<div class="row leaf"><svg class="cu"><use href="#cube"/></svg><span>Directional Light (4)</span><svg class="bu"><use href="#bulb"/></svg></div>
<div class="row leaf dim"><svg class="cu"><use href="#cube"/></svg><span>Main Camera (1)</span><svg class="ca"><use href="#cam"/></svg></div>
<div class="row leaf"><svg class="cu"><use href="#cube"/></svg><span>Main Camera (2)</span><svg class="ca"><use href="#cam"/></svg></div>
<div class="row leaf"><svg class="cu"><use href="#cube"/></svg><span>Directional Light (5)</span><svg class="bu"><use href="#bulb"/></svg></div>
<div class="row leaf"><svg class="cu"><use href="#cube"/></svg><span>Directional Light (6)</span><svg class="bu"><use href="#bulb"/></svg></div>
<div class="row"><span class="n">1</span><svg class="tr"><use href="#tri"/></svg><svg class="cu"><use href="#cube"/></svg><span>Directional Light (7)</span><svg class="bu"><use href="#bulb"/></svg></div>
<div class="row leaf last"><svg class="cu"><use href="#cube"/></svg><span>Directional Light (8)</span><svg class="bu"><use href="#bulb"/></svg></div>
</div>
<div class="side s8"><div class="sc"><small class="v">asd</small><svg class="st"><use href="#stack"/></svg><i class="rc"></i></div><div class="sc hov"><small class="v">2</small><svg class="st"><use href="#stack"/></svg><i class="rc"></i></div></div>
<div class="files f8"><div class="fl">▭ <svg><use href="#hash"/></svg></div><div class="fl">▭ <svg><use href="#hash"/></svg><span>Mod</span></div><div><span></span></div><div><span>C</span></div><div><span>E</span></div><div><span>D</span></div><div><span>La</span></div><div><span>Pa</span></div><div><span>To</span></div><div><span>ra</span></div><div><span>up</span></div><div><span>dr</span></div><div><span>er</span></div><div><span>ul</span></div><div><span>efi</span></div><div><span>oo</span></div><div><span>int</span></div><div class="sv">▶ <svg><use href="#fold"/></svg><span>Saved</span></div></div>
<div class="menu m3"><button class="hl ck">Enabled<kbd>Ctrl+CLICK</kbd></button><button disabled>Ctrl+DRAG to move or Ctrl+Shift+DRAG to copy</button><hr><button disabled>Filter Selection By 'Light'</button><hr><button>Copy Component</button><button disabled>Paste Component As New 'Light'</button><button>Paste Component Values As New</button><hr><button>Remove</button><hr><button>Hide Light icon</button><hr><button>Open Settings</button></div>
</section>

<!-- highlighter window -->
<section class="tile t9">
<div class="hrows">
<div class="hr1"><svg class="cu"><use href="#cube"/></svg><b>asd (1)</b><svg class="gx"><use href="#gear2"/></svg><small>changeTarget</small><small>1</small><em class="nul">50</em><em class="nul">null</em><em class="nul">null</em><em class="qwe">Mice ▼</em><small>spawn</small></div>
<div class="hr2"><svg class="cu"><use href="#cube"/></svg><b>51515</b><svg class="gx"><use href="#gear2"/></svg><small>changeTarget</small><small>1</small><em class="nul">50</em><em class="nul">null</em><em class="nul">null</em><em class="qwe">Mice ▼</em><small>chang</small></div>
<div class="hr3"><svg class="cu"><use href="#jar"/></svg><b>as/d (3)</b><svg class="gx wide"><use href="#gear2"/></svg><small>changeTarget</small><small>1</small><em class="nul">50</em><em class="nul">null</em><em class="nul">null</em><em class="qwe">Mice</em><small>spawn</small></div>
</div>
<div class="hside"><i></i><i></i><i></i></div>
<div class="hdock"></div>
<div class="pop p9">
<div class="htabs"><button class="man">MANUAL MODE</button><button class="aut">AUTO MODE</button><button class="cmp"><i>☰</i>CompsPresets</button></div>
<div class="hl9"><span>Highlighter:</span><button>This</button><button class="on">Child</button><small>Clear</small></div>
<hr class="ln">
<div class="pal"><i class="a1"></i><i class="a2"></i><i class="a3"></i><i class="a4"></i><i class="a5"></i><i class="a6"></i><i class="a7"></i><i class="a8"></i><i class="a9"></i><i class="a10"></i><i class="a11"></i><i class="a12"></i><i class="a13"></i><i class="a14"></i><i class="a15"></i></div>
<label class="cb c9"><input type="checkbox">Use Label Color</label>
<hr class="ln ln2">
<div class="pal tall"><i class="b1"></i><i class="b2"></i><i class="b3"></i><i class="b4"></i><i class="b5"></i><i class="b6"></i><i class="b7"></i><i class="b8"></i><i class="b9"></i><i class="b10"></i><i class="b11"></i><i class="b12"></i><i class="b13"></i><i class="b14"></i><i class="b15"></i><i class="b16"></i></div>
<div class="grp">
<div class="g1"><label class="cb"><input type="checkbox" checked>Use Background Color</label><button class="sw" aria-label="Background colour"></button></div>
<div class="g2"><label class="cb"><input type="checkbox">Narrow Height</label><label class="cb"><input type="checkbox">1 pixel Height</label></div>
<p>Horizontal Align:</p>
<div class="al"><button class="on">&lt;&lt;Min</button><button>•Fold</button><button>•Label</button><button>Label•</button><button>•Modules</button></div>
<div class="al"><label class="cb"><input type="checkbox">Fixed</label><button>•Fold</button><button>•Label</button><button>Label•</button><button>•Modules</button><button class="on">Max&gt;&gt;</button></div>
</div>
<hr class="ln ln3">
<div class="irow"><span class="il">Icon:</span><button class="xx">x</button><div class="ibox"><svg><use href="#jar"/></svg></div><span class="cl">Color:</span><button class="sw wh" aria-label="Icon colour"></button></div>
<div class="itabs"><button>Internal Unity Icons</button><button class="on">External Texture2D Icons</button></div>
<div class="irow2"><button class="ub">Other...</button><span>Last Icons:</span><div class="lbox"><svg><use href="#jar"/></svg></div></div>
</div>
<div class="tip tip9">HighLighter</div>
</section>

<!-- snapping -->
<section class="tile t10">
<div class="tabs blue"><span class="tab w92"><svg class="i"><use href="#info"/></svg>Inspector</span><span class="sp1"></span><svg class="lk"><use href="#lock"/></svg><svg class="dt"><use href="#dots"/></svg></div>
<div class="ohead"><svg class="big"><use href="#cube"/></svg><div class="ocol"><div><input type="checkbox" checked aria-label="Active"><input class="fld" type="text" value="Directional Light (2)" aria-label="Name"><label class="cb"><input type="checkbox">Static<i>▼</i></label></div><div class="tl"><label for="tg">Tag</label><button class="dd" id="tg">Untagged<i>▼</i></button><label for="ly">Layer</label><button class="dd w123" id="ly">Default<i>▼</i></button></div></div></div>
<div class="chead"><svg class="td"><use href="#trid"/></svg><svg class="i"><use href="#axis"/></svg><b>Transform</b><span class="sp1"></span><svg class="hp"><use href="#help"/></svg><svg class="dt"><use href="#dots"/></svg></div>
<div class="vec"><span>Position</span><label>X<input class="fld" value="0"></label><label>Y<input class="fld" value="3"></label><label>Z<input class="fld" value="0"></label><svg><use href="#magnet"/></svg><i class="grn"></i></div>
<div class="vec"><span>Rotation</span><label>X<input class="fld" value="50"></label><label>Y<input class="fld" value="-30"></label><label>Z<input class="fld" value="0"></label><svg><use href="#magnet"/></svg><svg><use href="#axisd"/></svg></div>
<div class="vec"><span>Scale</span><label>X<input class="fld" value="1"></label><label>Y<input class="fld" value="1"></label><label>Z<input class="fld" value="1"></label><svg><use href="#magnet"/></svg></div>
<div class="chead c2"><svg class="td"><use href="#tri"/></svg><svg class="i" viewBox="0 0 16 16"><path d="M2 9L8 3M5 12L11 6M8 15L14 9" stroke="#bbb" stroke-width="1.300"/><path d="M8 11L14 4M10 14L15 9M12 3H14.500V6" stroke="#e0b23c" stroke-width="1.800" fill="none"/></svg><input type="checkbox" checked aria-label="Light enabled"></div>
<div class="menu m4"><button>Enable Scale Snapping</button><hr><button>Holding HotKey to fast invert Snap</button><hr><button>Auto-Apply Snap (If the selection changes)</button><hr><button class="ck">Snap X-axis</button><button class="ck">Snap Y-axis</button><button class="ck">Snap Z-axis</button><hr><button class="ck">Use Local Space</button><hr></div>
</section>

<!-- hyper graph -->
<section class="tile t11">
<div class="tabs blue win"><span class="tab w88">HyperGraph</span><span class="sp1"></span><svg class="dt"><use href="#dots"/></svg><svg class="lk"><use href="#max"/></svg><svg class="lk"><use href="#x"/></svg></div>
<div class="zoom"><button>20%</button><button class="on">40%</button><button>60%</button><button>80%</button><button>∞</button><span class="sp1"></span><button class="on">AutoReload</button><button>AutoHide</button></div>
<div class="mode"><button class="ev">EVENTS MODE</button><button>Arrays</button><button>Assets</button><button>SelfRef</button></div>
<div class="gtitle"><span>HyperGraph: 'Main Camera (UnityEngine.GameObject)'</span><button class="xx">x</button></div>
<div class="gnav"><button>◂</button><button>▸</button><button>↻</button></div>
<div class="node nb"><div class="cap">Button</div><div class="prt">Button</div><div class="out">m_OnClick</div></div>
<div class="node nc"><div class="cap">Main Camera</div><div class="prt p77">Transform</div><div class="prt p63">Camera</div><div class="tex">targetTexture</div><div class="prt p94">AudioListener</div></div>
<svg class="wire" viewBox="0 0 220 120"><path d="M54 65Q75 66 82 58T98 51" stroke="#d8a52a" stroke-width="1.600" fill="none"/><path d="M88 47L99 51L88 56Z" fill="#d8a52a"/><path d="M43.500 60.500H54.500V70.500H43.500ZM97.500 3.500H107.500V14.500H97.500ZM97.500 27.500H107.500V38.500H97.500ZM97.500 47.500H107.500V58.500H97.500ZM97.500 79.500H107.500V90.500H97.500Z" fill="#4f8588" stroke="#9fc4c4"/><path d="M47 63V68L51 65.500ZM100 6V12L104 9ZM100 30V36L104 33ZM100 50V56L104 53ZM100 82V88L104 85Z" fill="#16282c"/></svg>
<div class="zs"><i>−</i><input type="range" value="60" aria-label="Zoom"><i>+</i><span>140%</span></div>
</section>

<!-- layouts bar -->
<section class="tile t12">
<div class="lbar"><button>4 Split</button><button class="on">MAIN</button><span class="sp1"></span><button class="col">✔ Collab ▾</button></div>
<div class="l2"><div class="lp1"><div class="tabs"><span class="sp1"></span><svg class="lk"><use href="#lock"/></svg><svg class="dt"><use href="#dots"/></svg></div><div class="srch"><input type="text" aria-label="Search hierarchy"></div><div class="sc ic"><svg class="sp"><use href="#speaker"/></svg><svg class="i"><use href="#tent"/></svg><svg class="i"><use href="#cubes"/></svg><svg class="lk"><use href="#locks"/></svg><span class="sp1"></span><svg class="dt"><use href="#dots"/></svg></div><div class="sc e"><svg class="st"><use href="#stack"/></svg><i class="rc off"></i></div><div class="sc e"><svg class="i"><use href="#cubes"/></svg><svg class="st"><use href="#stack"/></svg><i class="rc"></i></div><div class="sc e"><svg class="st"><use href="#stack"/></svg><i class="rc"></i></div></div>
<div class="lp2"><div class="tabs"><span class="tab"><svg class="i"><use href="#fold"/></svg>Project</span></div><div class="srch"><svg class="pl"><use href="#plus"/></svg><svg class="lk fi"><use href="#find"/></svg></div><svg class="td ptd"><use href="#trid"/></svg><div class="lm"><small>cs</small><svg class="hs"><use href="#hash"/></svg>LayoutsMod</div></div>
<div class="lp3"><div class="tabs"><span class="tab"><svg class="i"><use href="#info"/></svg>Inspector</span></div><div class="lcb"><svg class="big"><use href="#cube"/></svg><input type="checkbox" checked aria-label="Active object"></div><p>Tag</p><div class="chead"><svg class="td"><use href="#trid"/></svg><svg class="i"><use href="#axis"/></svg><b>T</b></div></div></div>
<div class="menu m5"><button>Save Current Layout To MAIN</button><hr><button class="hl">Enable Layouts AutoSave</button><hr><button>Remove MAIN</button><hr><button>Open TopBar Settings</button></div>
</section>

<!-- column widths -->
<section class="tile t13">
<div class="hbar"><svg class="pl"><use href="#plus"/></svg><div class="sbox"><svg class="lk"><use href="#find"/></svg><input type="search" placeholder="All" aria-label="Search"></div></div>
<div class="hbody"><div class="strip28"></div>
<div class="rows w283">
<div class="row head"><svg class="un"><use href="#unity"/></svg><b>palms*</b><span class="arrow on">≡▸</span></div>
<div class="row dim"><span class="n">1</span><svg class="tr"><use href="#tri"/></svg><svg class="cu"><use href="#cube"/></svg><span>Main Camera</span><svg class="ca"><use href="#cam"/></svg></div>
<div class="row pre"><span class="n">21</span><svg class="tr"><use href="#tri"/></svg><svg class="cu"><use href="#cubef"/></svg><span>Plants_group1</span></div>
<div class="row leaf"><svg class="cu"><use href="#cube"/></svg><span>Directional Light</span><svg class="bu"><use href="#bulb"/></svg></div>
<div class="row leaf"><svg class="cu"><use href="#cube"/></svg><span>Directional Light (1)</span><svg class="bu"><use href="#bulb"/></svg></div>
<div class="row leaf sel"><svg class="cu"><use href="#cube"/></svg><span>Directional Light (2)</span><svg class="bu"><use href="#bulb"/></svg></div>
<div class="row leaf"><svg class="cu"><use href="#cube"/></svg><span>Directional Light (3)</span><svg class="bu"><use href="#bulb"/></svg></div>
<div class="row leaf"><svg class="cu"><use href="#cube"/></svg><span>Directional Light (4)</span><svg class="bu"><use href="#bulb"/></svg><svg class="gx"><use href="#gx"/></svg><small>Masd</small><em class="nul">null</em></div>
<div class="row leaf dim"><svg class="cu"><use href="#cube"/></svg><span>Main Camera (1)</span><svg class="ca"><use href="#cam"/></svg><svg class="ri"><use href="#rings"/></svg></div>
</div>
<div class="side s13"><div class="sc ic"><small>escription</small><svg class="sp"><use href="#speaker"/></svg><svg class="i"><use href="#tent"/></svg><svg class="i"><use href="#cubes"/></svg><svg class="lk"><use href="#locks"/></svg></div><div class="sc"><small class="v"></small><svg class="st"><use href="#stack"/></svg><i class="rc off"></i></div><div class="sc"><small class="v"></small><svg class="st"><use href="#stack"/></svg><i class="rc"></i></div><div class="sc"><small class="v"></small><svg class="st"><use href="#stack"/></svg><i class="rc"></i></div><div class="sc"><small class="v">2</small><svg class="st"><use href="#stack"/></svg><i class="rc"></i></div><div class="sc ss"><small class="v">qwe</small><svg class="st"><use href="#stack"/></svg><i class="rc"></i></div><div class="sc"><small class="v">g3rwewfwe</small><svg class="st"><use href="#stack"/></svg><i class="rc"></i></div><div class="sc"><small class="v">g3rwewfwe</small><svg class="pu"><use href="#pur"/></svg><svg class="st"><use href="#stack"/></svg><i class="rc"></i></div><div class="sc"><small class="v dimv">g3rwewfwe</small><svg class="st"><use href="#stack"/></svg><i class="rc off"></i></div></div></div>
<div class="tip tip13">Show Category List<br>Drag the icon to change width</div>
</section>

<!-- project folders -->
<section class="tile t14">
<div class="tabs blue win"><span class="tab w104">Project Folders</span><span class="sp1"></span><svg class="dt"><use href="#dots"/></svg><svg class="lk"><use href="#max"/></svg><svg class="lk"><use href="#x"/></svg></div>
<div class="pf0"><svg class="td"><use href="#trid"/></svg><svg class="onn" viewBox="0 0 28 12"><path d="M0 6L3 4V8ZM3 4H12V10H3ZM15 3V9M13 4H17M13 8H17" fill="#7d9a8a" stroke="#3fd052"/><path d="M19 4H22V8H19ZM24 8V4L27 8V4" fill="none" stroke="#31c94a" stroke-width="1.400"/></svg><span>Default</span><span class="sp1"></span><button class="on">Deep</button><button>Simple</button><button class="xx">x</button></div>
<div class="pf">
<div class="hov b q1"><svg class="i"><use href="#foldg"/></svg>HotButtonsExample</div>
<div class="b"><svg class="td"><use href="#trid"/></svg><svg class="i"><use href="#foldg"/></svg>RightMods</div>
<div class="q2"><svg class="hs"><use href="#hash"/></svg>CustomModule</div>
<div class="q2"><svg class="hs"><use href="#hash"/></svg>RightModBase</div>
<div class="q2"><svg class="hs"><use href="#hash"/></svg>RightModsCore</div>
<div class="q2"><svg class="hs"><use href="#hash"/></svg>RightModsDraw</div>
<div class="q2"><svg class="hs"><use href="#hash"/></svg>RightModsMenu</div>
<div class="q3"><svg class="tr"><use href="#tri"/></svg><svg class="i"><use href="#foldg"/></svg>Mods</div>
<div class="q3"><svg class="tr"><use href="#tri"/></svg><svg class="i"><use href="#foldg"/></svg>Settings</div>
<div class="b q1"><svg class="i"><use href="#foldg"/></svg>AdditionalFuncs.cs<span class="sp1"></span><small>asda</small><svg class="pn"><use href="#pencil"/></svg></div>
<div class="b"><svg class="tr"><use href="#tri"/></svg><svg class="i"><use href="#foldg"/></svg>RightClickGameObjectMenu<button class="typ">type ▾</button><svg class="grl" viewBox="0 0 12 12"><path d="M0 1H8M1 4H9M2 7H10M3 10H12" stroke="#2f5c48"/></svg><span class="sp1"></span><svg class="pn"><use href="#pencil"/></svg></div>
</div>
<div class="menu m6"><button class="ck">Show Descriptions</button><hr><button disabled>Rename 'Default'</button><button disabled>Remove 'Default'Category</button><hr><button>Remove</button><hr><button>Background Colors</button><hr><button>Open Bookmarks Settings</button></div>
</section>

<!-- top bar menus -->
<section class="tile t15">
<div class="tb"><svg><use href="#mem"/></svg><svg><use href="#star"/></svg><svg class="lit"><use href="#lr"/></svg><svg class="us"><use href="#unity"/></svg><svg><use href="#list"/></svg><svg><use href="#grid4"/></svg></div>
<div class="back"></div><small class="dlf">Directional Light</small>
<div class="menu m7"><button>Open Last Selection Mod</button><hr><button>[2]&nbsp;&nbsp; Directional Light (1)</button><button>Directional Light (1)</button><button>Directional Light</button><button>[3]&nbsp;&nbsp; Main Camera</button><hr><button>Open Las Selection Settings</button></div>
</section>

<section class="tile t16">
<div class="tb"><svg><use href="#mem"/></svg><svg><use href="#star"/></svg><svg><use href="#lr"/></svg><svg class="lit us"><use href="#unity"/></svg><svg><use href="#list"/></svg><svg><use href="#grid4"/></svg></div>
<div class="behind"><div class="bl"><svg class="dt"><use href="#dots"/></svg><svg class="dt"><use href="#dots"/></svg></div><div class="br"><div class="tabs"><span class="tab w92"><svg class="i"><use href="#info"/></svg>Inspector</span></div><div class="hbar"><svg class="pl"><use href="#plus"/></svg></div><div class="rows in32"><div class="row head"><svg class="un"><use href="#unity"/></svg><b>palms*</b></div><div class="row"><span class="n">1</span><svg class="tr"><use href="#tri"/></svg></div><div class="row"><span class="n">21</span><svg class="tr"><use href="#tri"/></svg></div><div class="row"></div><div class="row"></div><div class="row leaf"><svg class="cu"><use href="#cube"/></svg><span>Directional Light (2)</span><svg class="bu"><use href="#bulb"/></svg></div></div></div></div>
<div class="menu m8"><button>Open Scenes History Mod</button><hr><button class="ck hl">&nbsp;&nbsp; palms</button><button>&nbsp;&nbsp; asdasdasdasd</button><hr><button>+ Add All Opened Scenes</button><hr><button>Open Scenes History Mod Settings</button></div>
</section>

<section class="tile t17">
<div class="tb"><svg class="lit"><use href="#star"/></svg><svg><use href="#lr"/></svg><svg class="us"><use href="#unity"/></svg><svg><use href="#list"/></svg><svg><use href="#grid4"/></svg><span class="sp1"></span><svg><use href="#play"/></svg></div>
<div class="back17"><div class="tabs"></div><div class="hbar"><svg class="pl"><use href="#plus"/></svg></div><div class="rr"><div class="row"></div><div class="row"><small>MainCamera</small></div><div class="row"></div><div class="row"></div><div class="row"></div><div class="row"></div><div class="row"></div><div class="row vals"><em class="nul">null</em><em class="qwe">qwe ▼</em><svg class="pu"><use href="#pur"/></svg></div><div class="row dim"><small>MainCamera</small></div><div class="row"><small>MainCamera</small></div><div class="row"></div><div class="row"></div><div class="row"></div></div></div>
<div class="menu m9"><button>Open Bookmarks Mod</button><hr><button class="hl">Category - Default<kbd>▸</kbd></button><button>Category - Spawn Points<kbd>▸</kbd></button><hr><button>1) 'Default'</button><button class="ck">2) 'Spawn Points'</button><button>+ Add Category</button><hr><button>Rename 'Spawn Points'</button><button>Remove 'Spawn Points' Category</button><hr><button>Use Background Colors</button><button disabled>Background Colors</button><button>Show Descriptions</button><hr><button>Open Bookmarks Mod Settings</button></div>
<div class="menu m9b"><button>Directional Light (6)</button><button>Directional Light (8)</button></div>
</section>

<section class="tile t18">
<div class="tb"><svg class="us"><use href="#unity"/></svg><svg><use href="#list"/></svg><svg class="lit"><use href="#grid4"/></svg></div>
<div class="tabs"><span class="tab w54">pector</span></div><div class="hbar"></div>
<div class="rows"><div class="row head"><svg class="un"><use href="#unity"/></svg><b>palms*</b><span class="arrow">≡▸</span><small>Tags</small></div></div>
<div class="menu m10"><button class="hl">Open Project Folders</button><hr><button>Open Project Folders Settings</button></div>
</section>

<section class="tile t19">
<div class="tb"><svg class="lit"><use href="#mem"/></svg><svg><use href="#star"/></svg><svg><use href="#lr"/></svg><svg class="us"><use href="#unity"/></svg><svg><use href="#list"/></svg><svg><use href="#grid4"/></svg></div>
<div class="mc"><svg class="cu"><use href="#cube"/></svg><span>Main Camera (1)</span><svg class="ca"><use href="#cam"/></svg><svg class="ri"><use href="#rings"/></svg></div>
<div class="menu m11"><button>Open HyperGraph</button><button>Open HyperGraph and attach to Inspector</button><hr><button class="ck">UnityEvents Mode</button><hr><button class="ck">Auto refresh when selection changed</button><button class="ck">Display loading indicator</button><button class="ck">Red null references</button><hr><button>Open HyperGraph Settings</button></div>
</section>

<section class="tile t20">
<div class="tb"><svg><use href="#mem"/></svg><svg><use href="#star"/></svg><svg><use href="#lr"/></svg><svg class="us"><use href="#unity"/></svg><svg class="lit"><use href="#list"/></svg><svg><use href="#grid4"/></svg></div>
<div class="behind"><div class="bl"><svg class="dt"><use href="#dots"/></svg><svg class="dt"><use href="#dots"/></svg></div><div class="br"><div class="tabs"><span class="tab w92"><svg class="i"><use href="#info"/></svg>Inspector</span></div><div class="hbar"><svg class="pl"><use href="#plus"/></svg></div><div class="rows in32"><div class="row head"><svg class="un"><use href="#unity"/></svg><b>palms*</b></div><div class="row dim"><span class="n">1</span><svg class="tr"><use href="#tri"/></svg><svg class="cu"><use href="#cube"/></svg></div><div class="row"><span class="n">21</span><svg class="tr"><use href="#tri"/></svg><svg class="cu"><use href="#cubef"/></svg></div><div class="row leaf"><svg class="cu"><use href="#cube"/></svg></div><div class="row leaf"><svg class="cu"><use href="#cube"/></svg></div><div class="row leaf"><svg class="cu"><use href="#cube"/></svg><span>Directional Light (2)</span></div></div></div></div>
<div class="menu m12"><button>Open Hierarchy Expanded Mem Mod</button><hr><button disabled>No Items</button><hr><button class="hl">Collapse All</button><hr><button>+ Create New State</button><hr><button>Open Expanded Mem Settings</button></div>
</section>

<!-- bottom docks -->
<section class="tile dock k1">
<div class="dtabs"><span class="tb1"><svg><use href="#anim"/></svg>Animator</span><span class="tb2"><svg><use href="#clock"/></svg>Animation</span><span class="tb3"><svg><use href="#prof"/></svg>Profiler</span><span class="tab act">Last Selection Mod</span><span class="sp1"></span><svg class="dt"><use href="#dots"/></svg></div>
<div class="cells c1"><i class="nav">◂</i><i class="nav">▸</i><div><svg><use href="#cube"/></svg>Main Camera</div><div class="lt"><svg><use href="#cube"/></svg>Directional Light</div><div><svg><use href="#cube"/></svg>Directional Light</div><div><svg><use href="#cube"/></svg>Directional Light</div></div>
<div class="glass g1a"></div>
<div class="dtabs r2"><span class="s1t"><svg><use href="#sharp"/></svg>Scene</span><span class="tab cn"><svg><use href="#cons"/></svg>Console</span><span class="gm"><svg><use href="#pad"/></svg>Game</span><span class="sp1"></span><svg class="dt"><use href="#dots"/></svg></div>
<div class="tools"><button>Clear</button><button>Collapse</button><button>Clear on Play</button><button>Clear on Build</button><button class="on">Error Pause</button><button>Editor▾</button><span class="fbx"><svg><use href="#find"/></svg></span></div>
</section>
<section class="tile dock k2">
<div class="dtabs"><i class="nav">◂</i><span class="an">Animation</span><span class="tb3"><svg><use href="#prof"/></svg>Profiler</span><span class="shm">Scenes History Mod</span><span class="tab act hx">Hierarchy Expanded</span><i class="nav">▸</i><svg class="dt"><use href="#dots"/></svg></div>
<div class="cells c2"><div><svg><use href="#list"/></svg>Expanded 1</div><div class="lt"><svg><use href="#list"/></svg>Expanded 2</div><div><svg><use href="#list"/></svg>Expanded 3</div><b>≡</b><b>+</b></div>
<div class="glass g2a"></div>
<div class="dtabs r2"><span class="s1t"><svg><use href="#sharp"/></svg>Scene</span><span class="tab cn"><svg><use href="#cons"/></svg>Console</span><span class="gm"><svg><use href="#pad"/></svg>Game</span></div>
<div class="tools"><button>Clear</button><button>Collapse</button><button>Clear on Play</button><button>Clear on Build</button><button class="on">Error Pause</button><button>Editor▾</button><span class="fbx"><svg><use href="#find"/></svg></span></div>
</section>
<section class="tile dock k3">
<div class="dtabs"><i class="nav">◂</i><span class="an">Animation</span><span class="tb3"><svg><use href="#prof"/></svg>Profiler</span><span class="tab act shm">Scenes History Mod</span><span class="hx">Hierarchy Expanded</span></div>
<div class="cells c3"><div>palms<svg class="or"><use href="#unity"/></svg></div><div>asdasdasdasd<svg><use href="#unity"/></svg></div><div>asdasdasdasd<svg><use href="#unity"/></svg></div></div>
<div class="glass g3a"></div>
<div class="dtabs r2"><span class="s1t"><svg><use href="#sharp"/></svg>Scene</span><span class="tab cn"><svg><use href="#cons"/></svg>Console</span><span class="gm"><svg><use href="#pad"/></svg>Game</span></div>
<div class="tools"><button>Clear</button><button>Collapse</button><button>Clear on Play</button><button>Clear on Build</button><button class="on">Error Pause</button><button>Editor▾</button></div>
</section>
<section class="tile dock k4">
<div class="dtabs"><span class="tab act df"><svg><use href="#star"/></svg>Default</span><span class="go"><svg><use href="#lr"/></svg>GameObjects Selection Hi...</span><span class="sp1"></span><svg class="dt"><use href="#dots"/></svg></div>
<div class="big4"><button>☰ Default</button><div><svg><use href="#cube"/></svg>Directional Light</div><div><svg><use href="#cube"/></svg>Directional Light</div></div>
<div class="glass g4a"></div>
<div class="dtabs r4"><span class="tb1"><svg><use href="#anim"/></svg>Animator</span><span class="tab an4"><svg><use href="#clock"/></svg>Animation</span><span class="tb3"><svg><use href="#prof"/></svg>Profiler</span><span class="sp1"></span><svg class="lk dimi"><use href="#lock"/></svg><svg class="dt"><use href="#dots"/></svg></div>
</section>

<!-- size captions -->
<span class="cap1 n1">450/102</span><span class="cap1 n2">569/166</span><span class="cap1 n3">337/59</span><span class="cap1 n4">373/392</span><span class="cap1 n5">499/224</span><span class="cap1 n6">484/523</span><span class="cap1 n7">1442/1145</span><span class="cap1 n8">609/278</span><span class="cap1 n9">377/338</span><span class="cap1 n10">509/166</span><span class="cap1 n11">373/193</span><span class="cap1 n12">358/207</span><span class="cap1 n13">362/209</span><span class="cap1 n14">572/141</span><span class="cap1 n15">332/294</span><span class="cap1 n16">477/327</span><span class="cap1 n17">369/160</span><span class="cap1 n18">302/177</span><span class="cap1 n19">331/89</span><span class="cap1 n20">334/206</span><span class="cap1 n21">398/168</span><span class="cap1 n22">431/92</span>

<!-- pointers -->
<svg class="hand h1"><use href="#hand"/></svg><svg class="hand h2"><use href="#hand"/></svg><svg class="hand h3"><use href="#hand"/></svg><svg class="hand h4"><use href="#hand"/></svg><svg class="hand h5"><use href="#hand"/></svg><svg class="hand h6"><use href="#hand"/></svg><svg class="hand h7"><use href="#hand"/></svg><svg class="hand h8"><use href="#hand"/></svg><svg class="hand h9"><use href="#hand"/></svg><svg class="hand h10"><use href="#hand"/></svg><svg class="hand h11"><use href="#hand"/></svg><svg class="hand h12"><use href="#hand"/></svg><svg class="hand h13"><use href="#hand"/></svg><svg class="hand h14"><use href="#hand"/></svg><svg class="hand h15"><use href="#hand"/></svg><svg class="hand h16"><use href="#hand"/></svg><svg class="hand h17"><use href="#hand"/></svg><svg class="hand h18"><use href="#hand"/></svg><svg class="hand h19"><use href="#hand"/></svg><svg class="hand h20"><use href="#hand"/></svg><svg class="hand h21"><use href="#hand"/></svg><svg class="hand h22"><use href="#hand"/></svg><svg class="hand h23"><use href="#hand"/></svg><svg class="hand h24"><use href="#hand"/></svg><svg class="hand h25"><use href="#hand"/></svg><svg class="hand h26"><use href="#hand"/></svg><svg class="hand h27"><use href="#hand"/></svg><svg class="hand h28"><use href="#hand"/></svg><svg class="hand h29"><use href="#hand"/></svg><svg class="hand h30"><use href="#hand"/></svg><svg class="hand h31"><use href="#hand"/></svg><svg class="hand h32"><use href="#hand"/></svg><svg class="hand h33"><use href="#hand"/></svg><svg class="hand h34"><use href="#hand"/></svg><svg class="hand h35"><use href="#hand"/></svg><svg class="hand h36"><use href="#hand"/></svg><svg class="hand h37"><use href="#hand"/></svg><svg class="hand h38"><use href="#hand"/></svg><svg class="hand h39"><use href="#hand"/></svg><svg class="hand h40"><use href="#hand"/></svg><svg class="hand h41"><use href="#hand"/></svg><svg class="hand h42"><use href="#hand"/></svg><svg class="hand h43"><use href="#hand"/></svg><svg class="hand h44"><use href="#hand"/></svg>
<svg class="ar r1"><use href="#arrl"/></svg><svg class="ar r2a"><use href="#arrr"/></svg><svg class="ar r3"><use href="#arrl"/></svg><svg class="ar r4a"><use href="#arrl"/></svg><svg class="ar r5"><use href="#arrr"/></svg><svg class="ar r6"><use href="#arrl"/></svg><svg class="ar r7"><use href="#arrr"/></svg><svg class="ar r8"><use href="#arrl"/></svg><svg class="ar r9"><use href="#arrr"/></svg><svg class="ar r10"><use href="#arrl"/></svg><svg class="ar r11"><use href="#arrr"/></svg><svg class="ar r12"><use href="#arrl"/></svg><svg class="ar r13"><use href="#arrr"/></svg><svg class="ar r14"><use href="#arrl"/></svg><svg class="ar r15"><use href="#arrr"/></svg>
</main>
</body>
</html>
```
FILE: styles.css
```css
*,*::before,*::after{box-sizing:border-box}
body{margin:0;background:#fff;font:12px/16px Inter,"Liberation Sans",sans-serif;color:#c8c8c8}
p{margin:0}
button,input{font:inherit;color:inherit;margin:0;padding:0;border:0;background:none}
em,i{font-style:normal}
svg{flex:none}
.defs{position:absolute;width:0;height:0}
.desk{position:relative;min-height:100vh;overflow:hidden}
.glyphs{position:absolute;left:0;top:0;width:410px;height:150px}
.glyphs text{font-family:Inter,sans-serif;fill:#fff}
.g6{font-size:5px}.g8{font-size:8px}.g7{font-size:7px;font-weight:800;font-style:italic}
.glyphs .red{fill:#f0441e;stroke:#000;stroke-width:1px;paint-order:stroke}
.caret{position:absolute;left:15px;top:463px;width:2px;height:28px;background:#222}

/* tiles */
.tile{position:absolute;overflow:hidden;background:#383838;display:flex}
.sp1{flex:1}
.i{width:16px;height:16px}
.rows{display:flex;flex-direction:column;flex:none}
.w382{width:382px}.w374{width:374px}.w283{width:283px}
.row{display:flex;align-items:center;height:16px;border-bottom:1px solid #4e4e4e;white-space:nowrap;flex:none}
.row.leaf{padding-left:25px}
.row.last{border-color:transparent}
.n{width:13px;text-align:right;font-size:9px;font-weight:700}
.tr{width:8px;height:16px;margin-left:4px}
.cu{width:15px;height:16px;margin:0 11px 0 13px}
.bu{width:8px;height:16px;margin-left:20px}
.gx{width:20px;height:16px;margin-left:6px}
.ca{width:18px;height:16px;margin-left:20px}
.ri{width:20px;height:16px;margin-left:3px}
.pu{width:10px;height:16px;margin-left:8px}
.row small{font-size:8px;margin-left:7px}
.nul,.qwe{font-size:8px;line-height:11px;padding:0 2px;border-radius:2px;background:#242424;margin-left:8px}
.qwe{background:#505050;margin-left:2px;padding:0 4px}
.pre{color:#7fa9ee}.pre .n{color:#c8c8c8}
.dim{color:#6c6c6c}.dim .bu,.dim .ca,.dim .ri{opacity:.3}.dim .n{color:#c8c8c8}
.hov{background:#444}
.sel{background:#2c5d87;color:#fff}
.head{background:#4a4a4a;color:#d6d6d6;padding-left:1px;border:0}
.head b{font-weight:600;margin-left:14px}
.un{width:14px;height:14px}
.arrow{margin-left:auto;font-size:12px}
.arrow.on{background:#3a6b70}
.side{flex:1;display:flex;flex-direction:column}
.sc{display:flex;align-items:center;justify-content:flex-end;height:16px;flex:none}
.rc{width:15px;height:12px;background:#647674;position:relative}
.rc::after,.hside i::after{content:"";position:absolute;left:4px;top:3px;width:6px;height:6px;border:1px solid #cdd8d6;border-radius:3px}
.rc.off{background:none;opacity:.6}
.rc.off::after{left:9px}
.rc.teal{background:#33606a;width:18px;height:16px}
.rc.teal::after{left:11px;top:5px;opacity:.6}
.st{width:8px;height:16px;margin:0 8px;opacity:.7}
.chev{margin-right:8px;color:#777}
.sp{width:12px;height:16px}
.lk{width:12px;height:16px}
.dt{width:6px;height:16px}
.td{width:10px!important;height:12px!important}
.strip20{width:20px;background:#2b2b2b;flex:none}
.strip34{width:34px;background:#2b2b2b;border-left:2px solid #191919;flex:none}
.strip28{width:28px;background:#2b2b2b;flex:none}
.w92{width:92px}.w88{width:88px}.w104{width:104px}.w54{width:54px}

.t1{left:0;top:589px;width:450px;height:102px;padding:2px 0 0 4px}
.s1{flex:none;width:36px;border-right:2px solid #191919}
.down{position:absolute;left:427px;top:30px;width:12px;height:34px}
.t2{left:450px;top:525px;width:569px;height:166px;padding-top:2px}
.t2 .cu,.t3 .cu,.t8 .cu{margin-left:10px}
.s2{flex:none;width:42px;border-right:2px solid #191919}
.blk{width:12px;height:14px;background:#2f5f68;margin-right:auto}
.files{margin-left:auto;width:46px;font-size:8px;margin-top:-6px}
.files div{display:flex;align-items:center;height:16px;gap:2px;white-space:nowrap}
.files div span{font-size:12px;margin-left:3px}
.files div span:first-child{margin-left:26px}
.files svg{width:12px;height:14px}
.t3{left:1019px;top:632px;width:337px;height:44px}
.shift{margin-left:-24px;width:361px}
.t4{left:0;top:691px;width:373px;height:392px;background:#393939}
.s4{border-left:1px solid #2a2a2a}
.s4 .sc{justify-content:flex-start;gap:6px}.s4 small{font-size:9px}.s4 .asd{padding-left:30px}.s4 .asd small{font-size:8px}

/* popups */
.pop{position:absolute;background:#3d3d3d;border:1px solid #1e1e1e;display:flex;flex-direction:column}
.p4{left:7px;top:73px;width:357px;height:307px;background:#404040}
.ptitle{display:flex;height:41px;flex:none}
.ptitle span{width:303px;background:#2b2b2b;border:1px solid #1e1e1e;text-align:center;line-height:41px}
.ptitle svg{width:30px;height:24px;margin:8px 7px}
.filter{font-size:8px;font-weight:700;padding:16px 0 0 19px;height:44px}
.sort{display:flex;height:20px;font-size:12px;line-height:20px;margin-bottom:9px}
.sort span{width:88px;padding-left:17px;font-size:8px;font-weight:500}
.sort button{width:77px;border-right:2px solid #252525}
.on{background:#4c4c4c}
.found{margin:0 0 5px 14px;background:#2f2f2f;border-top:1px solid #1e1e1e;border-left:1px solid #262626;height:81px}
.found div{display:flex;height:16px;font-size:8px}
.found span{flex:1;padding-left:46px}
.found i{width:118px;margin-right:4px;border:1px solid #262626;display:flex;align-items:center;background:#333}
.found .bu{margin-left:4px}
.rescan{background:#585858;height:20px;color:#e6e6e6;flex:none;margin-bottom:5px}
.cb{display:flex;align-items:center;gap:4px;white-space:nowrap;height:14px}
input[type=checkbox]{appearance:none;width:14px;height:14px;background:#2a2a2a;border:1px solid #1c1c1c;border-radius:2px;flex:none;display:grid;place-items:center}
input[type=checkbox]:checked::before{content:"✓";font:bold 11px/12px "DejaVu Sans",sans-serif;color:#e8e8e8}
.p4 .cb{margin-bottom:8px}
.p4 .cb input{margin-left:-1px}
.note{height:20px;line-height:18px;font-size:9px;border:1px solid #232323;background:#464646;padding-left:3px;margin-bottom:2px;margin-top:-5px;color:#b2b2b2}
.note+.note{margin-top:0}

.t5{left:0;top:1083px;width:373px;height:194px;border-right:2px solid #222}
.tree{flex:1;padding-top:1px}
.tree div{display:flex;align-items:center;height:16px;white-space:nowrap;padding-left:18px}
.tree svg{width:15px;height:14px;margin-right:1px}
.tree .td{margin-right:4px}
.tree small{font-size:8px;margin:0 4px 0 -12px;color:#777;width:22px}
.tree .d1{padding-left:32px}.tree .d2{padding-left:46px}.tree .d3{padding-left:60px}.tree .d4{padding-left:74px}.tree .d5{padding-left:88px}.tree .d6{padding-left:102px}
.t6{left:373px;top:1069px;width:358px;height:207px;flex-direction:column;border-left:3px solid #191919}
.tabs{display:flex;align-items:center;height:20px;background:#282828;flex:none;gap:6px;padding-right:12px}
.tabs.win{gap:8px;padding-right:4px}
.tab{display:flex;align-items:center;gap:4px;background:#3c3c3c;height:100%;padding-left:5px;white-space:nowrap;border-right:1px solid #222}
.top4{border-top:4px solid #191919;height:24px}
.ihead{display:flex;height:54px;border-bottom:1px solid #1a1a1a;background:#3c3c3c;padding:6px 5px 0 8px;color:#8a8a8a;flex:none}
.ihead .big{width:30px;height:32px;margin-right:8px}
.icol{display:flex;flex-direction:column;align-items:flex-end;gap:5px}
.icol div{display:flex;margin-right:-5px;margin-top:-1px}
.hp{width:34px;height:16px}
.ub{background:#585858;border:1px solid #303030;border-radius:3px;color:#e6e6e6;width:44px;height:18px}
.ibody{padding:4px 5px 0 18px;color:#7e7e7e}
.ub.lg{display:block;width:332px;height:29px;margin-bottom:3px}
.ub:disabled{background:#444;color:#7a7a7a}
.ibody p{padding-top:20px}
.ibody .scr{display:flex;align-items:center;padding-top:4px}
.scr>span:first-child{width:122px}
.objf{flex:1;display:flex;border:1px solid #303030;border-radius:3px;align-items:center;margin-right:-3px;padding:0 4px;white-space:nowrap}
.hs{width:10px;height:12px;margin-right:3px}

.t7{left:731px;top:774px;width:499px;height:224px}
.up7{margin-top:-6px}
.t7 .row.sel{margin-left:-32px;padding-left:57px}
.s7{flex:none;width:136px;border-right:2px solid #191919}
.s7 .sc{gap:9px}.s7 .sc .st{margin-right:20px}
.fcol{flex:1}
.fcol div{display:flex;align-items:center;height:16px;padding-left:5px;gap:4px}
.fcol div.in{padding-left:34px}
.fcol div.in0{padding-left:34px}
.fcol svg{width:14px;height:14px}
.eye{position:absolute;left:3px;top:75px;width:32px;height:16px}
.t8{left:731px;top:998px;width:609px;height:278px;padding-top:3px}
.tealbg{background:#2f6a72}
.s8{flex:none;width:187px;border-right:2px solid #191919}
.v{font-size:8px;width:44px;text-align:right;margin-right:auto;white-space:nowrap}
.files.f8{width:48px;margin-top:-6px}
.files.f8 div span:first-child{margin-left:39px}
.files.f8 .sv{padding-left:12px}
.files.f8 .sv span{margin-left:0}

/* context menus */
.menu{position:absolute;display:flex;flex-direction:column;border:1px solid #979797;padding:2px;box-shadow:3px 3px 3px rgba(0,0,0,.55);background:linear-gradient(90deg,transparent 29px,#d9d9d9 29px,#d9d9d9 30px,transparent 30px) #f0f0f0;font-family:"Open Sans","Noto Sans",sans-serif;color:#000}
.menu button{display:flex;align-items:center;height:22px;flex:none;padding-left:31px;border:1px solid transparent;white-space:nowrap;text-align:left}
.menu button:disabled{color:#7b7b7b}
.menu .hl{background:linear-gradient(90deg,transparent 26px,#b4cde8 26px,#b4cde8 27px,transparent 27px) #d1e2f3;border-color:#7eaae0}
.menu hr{margin:3px 2px 3px 28px;border:0;border-top:1px solid #d7d7d7;flex:none}
.menu kbd{font:inherit;margin-left:auto;padding-right:20px}
.menu .ck::before{content:"✔";font:12px/18px "DejaVu Sans",sans-serif;width:22px;height:22px;border:1px solid #2da1d8;background:#bfdeee;margin:0 9px 0 -31px;text-align:center;padding-top:1px;flex:none}
.m1{left:381px;top:38px;width:183px}
.m2{left:159px;top:23px;width:323px;padding-top:6px;background:linear-gradient(90deg,transparent 24px,#d9d9d9 24px,#d9d9d9 25px,transparent 25px) #f0f0f0}
.m2 button{padding-left:26px}
.m2 hr{margin-left:23px;margin-right:7px}
.m2 kbd{padding-right:22px}
.m3{left:196px;top:30px;width:403px}
.m3 button{padding-left:30px}
.m3 kbd{padding-right:18px}
.m4{left:61px;top:149px;width:316px}
.m5{left:257px;top:15px;width:246px}
.m6{left:111px;top:70px;width:240px}
.m7{left:61px;top:20px;width:235px}
.m8{left:88px;top:16px;width:272px}
.m9{left:21px;top:16px;width:264px}
.m9 kbd{padding-right:8px}
.m9b{left:279px;top:45px;width:194px}
.m10{left:69px;top:15px;width:244px}
.m11{left:17px;top:19px;width:311px}
.m12{left:106px;top:16px;width:286px}

/* highlighter */
.t9{left:1442px;top:623px;width:484px;height:523px;border-left:2px solid #202020;background:linear-gradient(90deg,#2b2b2b 32px,#383838 32px)}
.hrows{width:376px;margin-top:-9px}
.hrows div{display:flex;align-items:center;height:16px;padding-left:63px;white-space:nowrap}
.hrows .cu{margin:0 3px 0 13px}
.hrows b{font-weight:400;width:46px}
.hrows small{font-size:9px;margin-left:4px;color:#b8d4de}
.hrows em{margin-left:3px}
.hrows .gx{margin:0}
.hrows .hr3{background:#cf1d29}
.hrows .hr3 .wide{margin-left:20px}
.hrows .hr3 .qwe+small{margin-left:-2px}
.hside{margin-top:-9px;width:20px;border-right:1px solid #191919;padding-left:4px}
.hside i{display:block;height:13px;margin:2px 0 3px;background:#647674;position:relative}
.hdock{position:absolute;left:0;right:0;top:459px;height:42px;border:solid #191919;border-width:2px 0 1px;background:linear-gradient(#282828 19px,#383838 19px)}
.p9{left:41px;top:44px;width:411px;height:458px}
.htabs{display:flex;height:32px;margin:5px 4px 8px;flex:none}
.htabs button{width:100px;border-right:1px solid #1e1e1e;white-space:nowrap}
.htabs .man{background:linear-gradient(#6b5050,#6b5050) 6px 5px/90px 22px no-repeat;border-left:1px solid #1e1e1e;display:flex;justify-content:flex-end;align-items:center;padding-right:5px}
.htabs .aut{background:linear-gradient(#2d5588,#2d5588) 5px 5px/90px 3px no-repeat}
.htabs .cmp{background:linear-gradient(#94692d,#94692d) 5px 5px/90px 3px no-repeat;margin-left:auto;border-left:1px solid #1e1e1e}
.cmp i{font-size:11px}
.hl9{display:flex;height:20px;padding:0 16px 0 6px;flex:none}
.hl9 span{width:95px}.hl9 button{width:98px;background:#383838;border-right:1px solid #232323}.hl9 button.on{background:#4c4c4c}
.hl9 small{font-size:8px;margin-left:auto}
.ln{border:0;border-top:1px solid #191919;margin:10px 10px 7px 14px;width:383px;flex:none}
.ln2{margin-top:47px}
.ln3{width:222px;margin:6px 0 7px 95px}
.pal{display:flex;height:18px;width:383px;margin-left:14px;border:1px solid #252525;background:#353535;padding:5px 0 5px 15px;flex:none}
.pal.tall{padding:2px 0 3px 15px}
.pal i{width:21px;flex:none}
.a1{background:#2f3a40}.a2{background:#ff5043}.a3{background:#23272b}.a4{background:#8bc763}.a5{background:#ff6f6f}.a6{background:#11405f}.a7{background:#06ca9d}.a8{background:#0966a0}.a9{background:#83b540}.a10{background:#438ccb}.a11{background:#e8795a}.a12{background:#4f3b7a}.a13{background:#ff8200}.a14{background:#1ba92b}.a15{background:#f8b71d}
.b1{background:#cf1d29}.b2{background:#fff}.b3{background:#3f6764}.b4{background:#fb2851}.b5{background:#677bc2}.b6{background:#e42248}.b7{background:#38b649}.b8{background:#f55d13}.b9{background:#2c4d71}.b10{background:#e47123}.b11{background:#077284}.b12{background:#8a7a5f}.b13{background:#3e9389}.b14{background:#941f2e}.b15{background:#dfdfdf}.b16{background:#07fdda}
.c9{margin:5px 0 0 13px}
.grp{height:124px;flex:none;width:392px;margin-left:8px;border:solid #262626;border-width:0 1px;padding:3px 3px 0 4px}
.g1{display:flex;justify-content:space-between;height:20px;align-items:center}
.sw{width:83px;height:20px;border:1px solid #191919;background:linear-gradient(#cf1d29 14px,#fff 14px)}
.sw.wh{background:#fff}
.g2{display:flex;margin:8px 0 0 12px;gap:100px}
.g2 .cb:first-child{width:79px}
.grp p{padding:3px 0 0 14px;height:22px}
.g2 .cb{height:16px}
.al{display:flex;margin-left:12px;height:20px}
.al button,.al label{width:60px;border-right:1px solid #262626;height:20px;white-space:nowrap}
.al label{height:16px;border:0}
.irow{display:flex;height:48px;align-items:center;flex:none}
.il{width:52px;padding-left:6px;align-self:flex-start}
.xx{width:10px;height:10px;background:#4c4c4c;font-size:8px;line-height:10px}
.irow .xx{align-self:flex-start;margin-top:6px}
.ibox{width:48px;height:48px;background:#282828;border:1px solid #1c1c1c;display:grid;place-items:center;margin-left:3px}
.ibox svg{width:42px;height:36px}
.cl{margin-left:17px;width:43px;margin-top:-4px}
.itabs{display:flex;height:20px;margin:5px 4px 1px;flex:none}
.itabs button{flex:1;border-right:1px solid #262626}
.irow2{display:flex;height:48px;margin:0 4px;align-items:center;flex:none}
.irow2 .ub{width:165px;height:48px}
.irow2 span{margin-left:17px}
.lbox{width:145px;height:48px;background:#282828;border:1px solid #1c1c1c;margin-left:auto;display:flex;align-items:center;padding-left:4px}
.lbox svg{width:26px;height:23px}
.tip{position:absolute;background:#3a3a3a;border:1px solid #191919;color:#d0d0d0;padding:4px 4px;white-space:nowrap}
.tip9{left:2px;top:48px;width:76px;height:25px}

/* inspector with snapping */
.t10{left:1442px;top:1147px;width:377px;height:338px;flex-direction:column;background:linear-gradient(#383838 197px,#fff 197px)}
.tabs.blue .tab{border-top:2px solid #3a79bb}
.ohead{display:flex;height:59px;border-bottom:1px solid #1a1a1a;background:#3c3c3c;flex:none}
.ohead .big{width:24px;height:28px;margin:8px 14px 0 6px}
.ocol{flex:1}
.ocol>div{display:flex;align-items:center;margin-top:8px;gap:4px}
.fld{background:#2a2a2a;border:1px solid #212121;border-radius:3px;height:18px;padding:0 3px;width:49px}
.ocol .fld{width:243px;font-weight:600}
.ocol .cb{padding-right:4px}
.ocol i{font-size:8px}
.ocol .tl{margin-top:7px}
.dd{width:133px;height:17px;background:#515151;border:1px solid #303030;border-radius:3px;display:flex;justify-content:space-between;padding:0 4px;line-height:15px}
.w123{width:123px}
.tl label+.dd+label{margin-left:10px}
.chead{display:flex;align-items:center;height:22px;background:#3e3e3e;padding:0 10px 0 5px;gap:4px;border-bottom:1px solid #303030;flex:none}
.chead b{margin-left:21px;font-weight:600}
.chead .hp{margin-right:8px}
.vec{display:flex;align-items:center;height:22px;padding-left:18px;flex:none}
.chead+.vec{margin-top:4px}
.vec span{width:132px}
.vec label{display:flex;align-items:center;width:66px;gap:5px}
.vec svg,.grn{width:16px;height:16px;margin-right:1px}
.grn{background:#7fbf2f;border:3px solid #555}
.c2{margin-top:5px;border-top:1px solid #1a1a1a}

/* graph */
.t11{left:0;top:1277px;width:362px;height:208px;flex-direction:column;background:repeating-linear-gradient(90deg,transparent 0 17px,#1c1c1c 17px 18px),repeating-linear-gradient(#252525 0 17px,#1c1c1c 17px 18px)}
.zoom,.mode{display:flex;color:#5c6c6e;height:15px;margin-top:5px;flex:none}
.zoom button{width:37px;text-align:left;padding-left:4px;line-height:14px;height:14px;white-space:nowrap}
.zoom .on,.mode button{background:#20474d}
.zoom .sp1+.on{width:71px;overflow:hidden}.zoom .sp1+.on+button{width:74px}
.mode{margin-top:0;gap:1px}
.mode button{width:60px;line-height:14px;height:14px}
.mode .ev{width:145px;text-align:left;padding-left:4px;margin-right:35px}
.gtitle{display:flex;font-size:10px;font-weight:500;line-height:12px;justify-content:space-between;padding:0 7px 0 2px}
.gnav{display:flex;gap:2px}
.gnav button{width:13px;height:14px;background:#3c3c3c;font-size:8px;line-height:14px}
.gnav button:last-child{margin-left:17px}
.node{position:absolute}
.cap{background:linear-gradient(#cfcfcf,#a8a8a8);color:#1f1f1f;font-weight:600;height:26px;line-height:26px;padding-left:23px;white-space:nowrap;overflow:hidden;position:relative}
.cap::before{content:"";position:absolute;left:3px;top:3px;width:13px;height:20px;border-radius:50%;background:#ddd;border:1px solid #999}
.prt{background:#1f4a5a;color:#d6e6ea;height:17px;padding-left:5px;margin-top:2px;white-space:nowrap;background-image:linear-gradient(135deg,transparent 94%,#9fe6ee 94%)}
.nb{left:48px;top:98px;width:94px}.nc{left:210px;top:80px;width:95px}
.out{text-align:right;background:#222f33;line-height:14px;padding-right:6px}
.p77{width:77px;margin-top:3px}.p63{width:63px;margin-top:3px}.p94{width:94px}
.tex{padding-left:20px;background:linear-gradient(#c8161d,#c8161d) 12px 3px/6px 8px no-repeat #141414;line-height:14px;font-weight:500}
.wire{position:absolute;left:100px;top:80px;width:220px;height:120px}
.zs{position:absolute;left:220px;bottom:1px;display:flex;align-items:center;gap:4px}
.zs i{width:10px;height:10px;line-height:9px;border:1px solid #666;text-align:center;font-size:9px}
.zs input{appearance:none;width:70px;height:6px;background:#3a3a3a}
.zs input::-webkit-slider-thumb{appearance:none;width:9px;height:12px;background:#484848;border:1px solid #666;border-radius:2px}

/* layouts bar */
.t12{left:362px;top:1344px;width:572px;height:141px;flex-direction:column}
.lbar{display:flex;background:#191919;height:30px;padding:8px 2px 0 8px;gap:1px;flex:none}
.lbar button{width:202px;background:#383838;text-align:left;padding-left:7px;height:22px}
.lbar .on{background:#4a4a4a}
.lbar .col{width:77px;padding-left:6px;height:20px;margin-top:-4px;border-radius:3px;white-space:nowrap}
.l2{display:flex;flex:1}
.lp1{width:141px;border-right:2px solid #191919}
.srch{height:19px;border-bottom:1px solid #222;display:flex;align-items:center;background:#3c3c3c}
.srch input{width:135px;height:16px;background:#2a2a2a;border:1px solid #1e1e1e;border-radius:0 8px 8px 0}
.sc.ic{justify-content:flex-start;gap:10px}
.lp2{width:361px;border-right:2px solid #191919;display:flex;flex-direction:column}
.pl{width:24px;height:16px;margin-left:3px}
.fi{margin-left:16px}
.ptd{margin:12px 0 0 99px}
.lm{margin-top:auto;display:flex;align-items:center;padding-left:118px;height:11px}
.lm small{font-size:8px;margin-right:3px;color:#888}
.lp3{flex:1;overflow:hidden}
.lp3 .tabs{padding:0}.lp3 .tab{padding-left:4px}
.lcb{display:flex;align-items:center;padding:6px 0 0 8px;gap:14px}
.lcb .big{width:24px;height:26px}
.lp3 p{padding-left:42px;margin-bottom:8px}
.lp3 .chead b{margin-left:12px}

/* widths */
.t13{left:934px;top:1319px;width:508px;height:166px;flex-direction:column}
.hbar{display:flex;align-items:center;height:22px;background:#3a3a3a;flex:none}
.t13 .pl{margin-right:161px}
.sbox{display:flex;width:308px;height:17px;border:1px solid #1c1c1c;border-radius:3px;background:#2a2a2a;align-items:center;padding-left:4px;gap:2px}
.sbox input{width:200px;outline:0}.sbox input::placeholder{color:#777;opacity:1}
.hbody{display:flex;flex:1}
.t13 .rows{border-right:1px solid #e01818}
.s13{flex:none;width:190px;background:#3b424e;border-right:2px solid #191919}
.s13 .ic{background:#4a505c;gap:4px}
.s13 .ic svg{margin-right:6px}.s13 small{font-size:8px}
.s13 .pu{margin:0 auto 0 -70px}
.s13 .dimv{opacity:.5}
.ss{background:#34557d}
.tip13{left:212px;top:48px;width:180px;height:40px;line-height:15px}

/* project folders */
.t14{left:0;top:1485px;width:332px;height:294px;flex-direction:column;border-top:1px solid #191919}
.pf0{display:flex;align-items:center;height:46px;padding:4px 4px 4px 2px;flex:none;gap:4px}
.pf0 .onn{width:28px;height:12px;margin-left:2px}
.pf0 button{width:50px;height:20px}
.pf0 .on{width:53px;margin-right:-4px}
.pf0 .xx{width:10px;height:10px;margin:-26px 0 0 -2px}
.pf div{display:flex;align-items:center;height:20px;padding:0 7px 0 11px;white-space:nowrap;gap:2px}
.pf div.b{font-weight:600;font-style:italic}
.pf div .i{margin:0 5px 0 0}
.pf div.q1{padding-left:22px}.pf div.b .tr{margin-left:0;margin-right:1px}
.pf div.q2{padding-left:32px}.pf .hs{width:12px;height:14px;margin-right:6px}
.pf div.q3{padding-left:15px}
.pf small{font-size:8px;font-style:normal;font-weight:400}
.pn,.grl{width:12px;height:12px}
.typ{background:#505050;padding:0 4px;border-radius:2px;font-style:normal;font-weight:400}

/* top bar tiles */
.t15,.t16,.t17,.t18,.t19,.t20{flex-direction:column}
.tb{display:flex;gap:2px;background:#191919;height:29px;padding:4px 4px 4px 3px;flex:none}
.tb svg{width:21px;height:21px;background:#383838;padding:3px;color:#eee}
.tb .us{padding:6px}
.tb .lit{background:#4c4c4c}
.t15{left:0;top:1779px;width:302px;height:177px}
.back{height:19px;background:#242424;border-bottom:1px solid #222;flex:none}
.dlf{font-size:8px;margin:auto 0 14px 10px}
.t16{left:302px;top:1796px;width:369px;height:160px}
.behind{display:flex;flex:1}
.bl{width:24px;border-right:2px solid #191919;padding:2px 8px;display:flex;flex-direction:column;gap:52px;background:#303030}
.br{flex:1}
.br .hbar{height:20px}
.in32{margin-left:33px}
.t17{left:671px;top:1629px;width:477px;height:327px}
.t17 .sp1+svg{margin-right:-4px}
.back17{flex:1}
.rr{margin-left:284px}
.rr .row{width:47px}.rr small{margin-left:46px}
.rr .vals{padding-left:10px}
.t18{left:1148px;top:1661px;width:331px;height:89px}
.t18 .tb{padding-left:7px}
.t18 .hbar{height:20px}
.t18 .arrow{margin-right:26px}.t18 .head{padding-right:2px}.t18 .head small{font-size:10px}
.t18 .tab{padding-left:0}
.t19{left:1148px;top:1750px;width:334px;height:206px}
.mc{display:flex;margin-top:auto;padding-left:80px;height:12px;color:#8a8a8a;white-space:nowrap}
.t20{left:1482px;top:1788px;width:398px;height:168px}

/* docks */
.dock{top:1956px;height:92px;flex-direction:column;border-top:1px solid #191919;border-left:1px solid #191919}
.k1{left:0;width:431px}.k2{left:431px;width:431px}.k3{left:862px;width:402px}.k4{left:1264px;width:431px}
.dtabs{display:flex;align-items:center;height:20px;background:#282828;flex:none;white-space:nowrap;padding-right:10px}
.dtabs.r2{height:19px}
.dtabs>span{display:flex;align-items:center;height:100%;flex:none;gap:0}
.dtabs>span.sp1{flex:1}
.dtabs span svg{width:14px;height:16px;margin-right:3px}
.act{border-top:2px solid #3a79bb}
.tb1{width:91px;padding-left:6px}.tb2{width:103px;padding-left:6px}.tb3{width:77px;padding-left:1px}
.k1 .act{width:128px}
.nav{width:15px;text-align:center}
.cells{display:flex;height:28px;margin:1px 0;flex:none;font-size:8px;overflow:hidden}
.cells div{display:flex;align-items:center;gap:5px;white-space:nowrap;background:#3e3e3e;flex:none;border-right:1px solid #2a2a2a}
.cells svg{width:22px;height:22px}
.cells .nav{line-height:28px}
.c1 div{width:97px;padding-left:2px}
.cells .lt{background:#484848}
.c1{padding-left:4px}
.c1 .nav{width:19px}
.c2 div{width:129px;padding-left:1px}.c2 b{width:20px;text-align:center;line-height:28px}
.c3 div{width:136px;padding-left:4px;justify-content:space-between;align-items:flex-start;line-height:18px}
.c3 svg{margin-top:2px}
.c3 .or{color:#f7a823}
.glass{position:absolute;background:rgba(64,150,170,.5);top:20px;height:29px}
.g1a{left:168px;width:95px}.g2a{left:153px;width:128px}.g3a{left:155px;width:134px}.g4a{left:162px;width:124px;top:22px;height:46px}
.s1t{width:77px;padding-left:5px}.cn{width:86px}.gm{padding-left:7px}
.tools{display:flex;height:22px;background:#3c3c3c;border-top:1px solid #222;flex:none;white-space:nowrap}
.tools button{padding:0 4px;border-right:1px solid #232323}
.tools .on{background:#505050}
.fbx{margin-left:auto;width:20px;background:#2a2a2a;border-radius:8px 0 0 8px;padding:2px}
.fbx svg{width:12px;height:16px}
.an{width:81px}.shm{width:134px;padding-left:6px}.hx{width:84px;padding-left:5px;overflow:hidden}
.k2 .act{width:87px}
.df{width:79px}.go{padding-left:8px}
.big4{display:flex;height:47px;align-items:center;flex:none;margin:1px 0 2px}
.big4 button{width:56px;height:16px;margin:0 44px;background:#303030;white-space:nowrap;padding:0}
.big4 div{width:142px;height:45px;display:flex;align-items:center;background:#3c3b42;border-right:2px solid #262626;gap:2px;white-space:nowrap}
.big4 svg{width:42px;height:42px}
.an4{width:97px;padding-left:6px}.dimi{opacity:.5;margin-right:8px}
.r4 .tb3{padding-left:6px}

/* captions */
.cap1{position:absolute;font:italic 10px/12px "Liberation Sans",Arial,sans-serif;color:#111;white-space:nowrap}
.n1{left:396px;top:569px}.n2{left:534px;top:697px}.n3{left:1037px;top:699px}.n4{left:384px;top:839px}.n5{left:676px;top:861px}.n6{left:1398px;top:989px;font-style:normal;font-weight:700}.n7{left:1382px;top:1011px;font-style:normal;font-weight:700}.n8{left:1349px;top:1080px}.n9{left:1390px;top:1283px}.n10{left:951px;top:1301px}.n11{left:369px;top:1281px}.n12{left:448px;top:1281px}.n13{left:369px;top:1303px}.n14{left:416px;top:1328px}.n15{left:338px;top:1660px}.n16{left:628px;top:1725px}.n17{left:518px;top:1776px}.n18{left:306px;top:1782px}.n19{left:1485px;top:1707px}.n20{left:1486px;top:1754px}.n21{left:1557px;top:1769px}.n22{left:1735px;top:2002px}

/* pointers */
.hand{position:absolute;width:25px;height:33px}
.h1{left:404px;top:651px}.h2{left:819px;top:565px}.h3{left:851px;top:530px;transform:rotate(-90deg)}
.h4{left:1229px;top:656px}.h5{left:1261px;top:656px}.h6{left:1292px;top:656px}
.h7{left:303px;top:698px}.h8{left:334px;top:747px}.h9{left:207px;top:761px}
.h10{left:142px;top:1219px}.h11{left:504px;top:1172px}.h12{left:872px;top:854px}.h13{left:915px;top:1022px}
.h14{left:1450px;top:637px;transform:rotate(90deg)}.h15{left:1782px;top:1292px}
.h16{left:64px;top:1325px}.h17{left:103px;top:1389px}
.h18,.h19,.h20,.h25,.h26,.h27{transform:rotate(180deg)}
.h18{left:192px;top:1289px}.h19{left:250px;top:1289px}.h20{left:304px;top:1289px}
.h21{left:436px;top:1360px}.h22{left:600px;top:1361px}
.h23{left:240px;top:1539px}.h24{left:96px;top:1559px}.h25{left:201px;top:1722px}.h26{left:238px;top:1722px}.h27{left:304px;top:1697px}
.h28{left:1227px;top:1351px}.h29{left:1288px;top:1351px}.h30{left:1349px;top:1351px}
.h31{left:51px;top:1794px}.h32{left:372px;top:1814px}.h33{left:677px;top:1648px}
.h34{left:1202px;top:1678px}.h35{left:1158px;top:1764px}.h36{left:1579px;top:1806px;opacity:.6}
.h37{left:202px;top:1999px}.h38{left:640px;top:1997px}.h39{left:1070px;top:1995px}.h40{left:1488px;top:2012px}
.h41{left:835px;top:2000px}.h42{left:977px;top:1991px}.h43{left:1279px;top:1968px}.h44{left:1332px;top:2002px}
.ar{position:absolute;width:10px;height:12px}
.r1{left:422px;top:1360px}.r2a{left:462px;top:1360px}.r3{left:1210px;top:1350px}.r4a{left:1273px;top:1350px}.r5{left:1315px;top:1350px}.r6{left:1347px;top:1350px}.r7{left:1361px;top:1350px}
.r8{left:185px;top:1997px}.r9{left:227px;top:1997px}.r10{left:624px;top:1996px}.r11{left:666px;top:1996px}.r12{left:1054px;top:1994px}.r13{left:1096px;top:1994px}.r14{left:1471px;top:2010px}.r15{left:1514px;top:2010px}
```
